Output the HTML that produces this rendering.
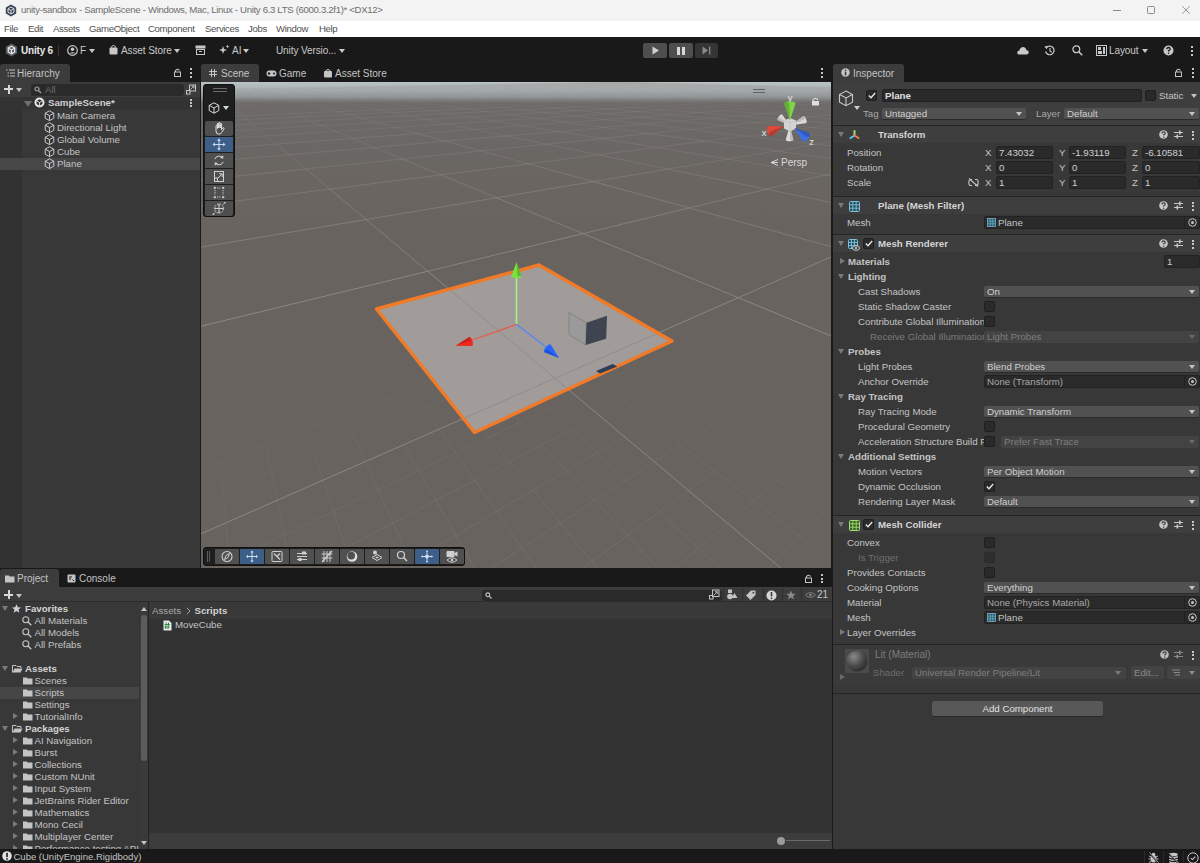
<!DOCTYPE html>
<html><head><meta charset="utf-8">
<style>
*{box-sizing:border-box;margin:0;padding:0}
html,body{width:1200px;height:863px;overflow:hidden;background:#383838}
body{position:relative;font-family:"Liberation Sans",sans-serif;font-size:9.7px;color:#c4c4c4}
.a{position:absolute}
.t{position:absolute;white-space:nowrap;line-height:12px}
.b{font-weight:bold}
svg{position:absolute;overflow:visible}
.fld{position:absolute;background:#2a2a2a;border-radius:2px}
.dd{position:absolute;background:#515151;border-radius:2px}
.dd:after{content:"";position:absolute;right:4px;top:50%;margin-top:-2px;border-left:3.5px solid transparent;border-right:3.5px solid transparent;border-top:4px solid #c4c4c4}
.cb{position:absolute;width:11px;height:11px;background:#2a2a2a;border-radius:2px}
.tri-d{position:absolute;width:0;height:0;border-left:4px solid transparent;border-right:4px solid transparent;border-top:6px solid #6e6e6e}
.tri-r{position:absolute;width:0;height:0;border-top:4px solid transparent;border-bottom:4px solid transparent;border-left:6px solid #6e6e6e}
</style></head><body>

<!-- TITLE BAR -->
<div class="a" style="left:0;top:0;width:1200px;height:21px;background:#f3f3f3"></div>
<div class="a" style="left:0;top:21px;width:1200px;height:16px;background:#ffffff"></div>
<div class="t" style="left:21px;top:4px;font-size:9.6px;color:#6e6e6e;letter-spacing:-0.32px">unity-sandbox - SampleScene - Windows, Mac, Linux - Unity 6.3 LTS (6000.3.2f1)* &lt;DX12&gt;</div>

<!-- MENU -->
<div class="t" style="left:4px;top:23px;font-size:9.6px;color:#505050;letter-spacing:-0.35px">File</div>
<div class="t" style="left:28px;top:23px;font-size:9.6px;color:#505050;letter-spacing:-0.35px">Edit</div>
<div class="t" style="left:53px;top:23px;font-size:9.6px;color:#505050;letter-spacing:-0.35px">Assets</div>
<div class="t" style="left:89px;top:23px;font-size:9.6px;color:#505050;letter-spacing:-0.35px">GameObject</div>
<div class="t" style="left:148px;top:23px;font-size:9.6px;color:#505050;letter-spacing:-0.35px">Component</div>
<div class="t" style="left:205px;top:23px;font-size:9.6px;color:#505050;letter-spacing:-0.35px">Services</div>
<div class="t" style="left:248px;top:23px;font-size:9.6px;color:#505050;letter-spacing:-0.35px">Jobs</div>
<div class="t" style="left:276px;top:23px;font-size:9.6px;color:#505050;letter-spacing:-0.35px">Window</div>
<div class="t" style="left:319px;top:23px;font-size:9.6px;color:#505050;letter-spacing:-0.35px">Help</div>

<!-- TOOLBAR -->
<div class="a" style="left:0;top:37px;width:1200px;height:45px;background:#191919"></div>

<!-- title icons -->
<svg style="left:5px;top:4px" width="12" height="13" viewBox="0 0 12 13"><path d="M6 0.5 L11.2 3.5 V9.5 L6 12.5 L0.8 9.5 V3.5Z" fill="#3a4452"/><path d="M6 3 L9 4.7 V8.3 L6 10 L3 8.3 V4.7Z" fill="none" stroke="#dfe3e8" stroke-width="1"/><path d="M6 6.5 V10 M6 6.5 L3 4.7 M6 6.5 L9 4.7" stroke="#dfe3e8" stroke-width="0.9"/></svg>
<div class="a" style="left:1113px;top:10px;width:8px;height:1px;background:#8a8a8a"></div>
<div class="a" style="left:1147px;top:6px;width:8px;height:8px;border:1px solid #8a8a8a;border-radius:1.5px"></div>
<svg style="left:1182px;top:6px" width="8" height="8"><path d="M0.3 0.3 L7.7 7.7 M7.7 0.3 L0.3 7.7" stroke="#8a8a8a" stroke-width="0.9"/></svg>

<!-- toolbar left -->
<svg style="left:5px;top:43px" width="13" height="14" viewBox="0 0 12 13"><path d="M6 0.5 L11.2 3.5 V9.5 L6 12.5 L0.8 9.5 V3.5Z" fill="#5a5f66"/><path d="M6 3 L9 4.7 V8.3 L6 10 L3 8.3 V4.7Z" fill="none" stroke="#e8e8e8" stroke-width="1.1"/><path d="M6 6.5 V10 M6 6.5 L3 4.7 M6 6.5 L9 4.7" stroke="#e8e8e8" stroke-width="1"/></svg>
<div class="t b" style="left:21px;top:45px;font-size:10px;color:#e6e6e6;letter-spacing:-0.2px">Unity 6</div>
<div class="a" style="left:58px;top:45px;width:1px;height:11px;background:#3a3a3a"></div>
<svg style="left:67px;top:45px" width="11" height="11"><circle cx="5.5" cy="5.5" r="4.8" fill="none" stroke="#c8c8c8" stroke-width="1.2"/><circle cx="5.5" cy="4.3" r="1.8" fill="#c8c8c8"/><path d="M2.3 8.6 Q5.5 5.8 8.7 8.6" fill="#c8c8c8"/></svg>
<div class="t" style="left:80px;top:45px;font-size:10px;color:#c8c8c8">F</div>
<div class="a" style="left:89px;top:49px;border-left:3.5px solid transparent;border-right:3.5px solid transparent;border-top:4px solid #c8c8c8"></div>
<svg style="left:109px;top:44px" width="9" height="11"><path d="M2.5 3.5 V2.5 Q4.5 0.3 6.5 2.5 V3.5" fill="none" stroke="#c8c8c8" stroke-width="1"/><rect x="0.5" y="3.5" width="8" height="7" rx="1" fill="#c8c8c8"/></svg>
<div class="t" style="left:121px;top:45px;font-size:10px;color:#c8c8c8;letter-spacing:-0.1px">Asset Store</div>
<div class="a" style="left:174px;top:49px;border-left:3.5px solid transparent;border-right:3.5px solid transparent;border-top:4px solid #c8c8c8"></div>
<svg style="left:195px;top:45px" width="11" height="10"><rect x="0.5" y="0.5" width="10" height="3" fill="#c8c8c8"/><rect x="1.5" y="4.5" width="8" height="5" fill="none" stroke="#c8c8c8" stroke-width="1"/><path d="M4 6.5 H7" stroke="#c8c8c8"/></svg>
<svg style="left:218px;top:44px" width="12" height="12"><path d="M5 2 L6 5 L9 6 L6 7 L5 10 L4 7 L1 6 L4 5Z" fill="#c8c8c8"/><path d="M9.5 0.5 L10 2 L11.5 2.5 L10 3 L9.5 4.5 L9 3 L7.5 2.5 L9 2Z" fill="#c8c8c8"/></svg>
<div class="t" style="left:232px;top:45px;font-size:10px;color:#c8c8c8">AI</div>
<div class="a" style="left:243px;top:49px;border-left:3.5px solid transparent;border-right:3.5px solid transparent;border-top:4px solid #c8c8c8"></div>
<div class="t" style="left:276px;top:45px;font-size:10px;color:#c8c8c8;letter-spacing:-0.1px">Unity Versio...</div>
<div class="a" style="left:339px;top:49px;border-left:3.5px solid transparent;border-right:3.5px solid transparent;border-top:4px solid #c8c8c8"></div>

<!-- play controls -->
<div class="a" style="left:643px;top:43px;width:24px;height:15px;background:#4e4e4e;border-radius:2px"></div>
<div class="a" style="left:669px;top:43px;width:24px;height:15px;background:#4e4e4e;border-radius:2px"></div>
<div class="a" style="left:695px;top:43px;width:23px;height:15px;background:#353535;border-radius:2px"></div>
<svg style="left:652px;top:46px" width="8" height="9"><path d="M0.5 0.5 L7 4.5 L0.5 8.5Z" fill="#d0d0d0"/></svg>
<div class="a" style="left:677px;top:47px;width:3px;height:8px;background:#d8d8d8"></div>
<div class="a" style="left:682px;top:47px;width:3px;height:8px;background:#d8d8d8"></div>
<svg style="left:702px;top:46px" width="10" height="9"><path d="M0.5 0.5 L6 4.5 L0.5 8.5Z" fill="#8a8a8a"/><rect x="7" y="0.5" width="1.3" height="8" fill="#8a8a8a"/></svg>

<!-- toolbar right -->
<svg style="left:1017px;top:46px" width="12" height="9"><path d="M2.5 8.5 Q0 8.5 0.3 6.2 Q0.6 4.5 2.4 4.5 Q2.8 1.5 5.8 1 Q8.8 1 9.3 4 Q11.8 4.2 11.8 6.3 Q11.6 8.5 9.5 8.5Z" fill="#c8c8c8"/></svg>
<svg style="left:1044px;top:45px" width="12" height="11"><path d="M2.2 3 A4.3 4.3 0 1 1 1.6 6.5" fill="none" stroke="#c8c8c8" stroke-width="1.2"/><path d="M0.3 1.8 L2.8 4.2 L3.5 0.8Z" fill="#c8c8c8"/><path d="M6 3 V6 L7.8 7.3" fill="none" stroke="#c8c8c8" stroke-width="1.1"/></svg>
<svg style="left:1072px;top:45px" width="11" height="11"><circle cx="4.3" cy="4.3" r="3.4" fill="none" stroke="#c8c8c8" stroke-width="1.3"/><path d="M6.8 6.8 L10.2 10.2" stroke="#c8c8c8" stroke-width="1.6"/></svg>
<svg style="left:1096px;top:45px" width="11" height="11"><rect x="0.5" y="0.5" width="10" height="10" fill="none" stroke="#c8c8c8" stroke-width="1"/><rect x="2" y="2" width="3" height="3" fill="#c8c8c8"/><rect x="2" y="6" width="4" height="3" fill="#c8c8c8"/><rect x="7" y="2" width="2" height="7" fill="#c8c8c8"/></svg>
<div class="t" style="left:1109px;top:45px;font-size:10px;color:#c8c8c8;letter-spacing:-0.1px">Layout</div>
<div class="a" style="left:1142px;top:49px;border-left:3.5px solid transparent;border-right:3.5px solid transparent;border-top:4px solid #c8c8c8"></div>
<svg style="left:1163px;top:45px" width="11" height="11"><circle cx="5.5" cy="5.5" r="5" fill="#c8c8c8"/><path d="M3.8 4.2 Q3.8 2.5 5.5 2.5 Q7.2 2.5 7.2 4 Q7.2 5 5.6 5.6 V6.6" fill="none" stroke="#191919" stroke-width="1.3"/><circle cx="5.6" cy="8.3" r="0.8" fill="#191919"/></svg>
<div class="a" style="left:1191px;top:46px;width:2px;height:2px;background:#c8c8c8"></div>
<div class="a" style="left:1191px;top:50px;width:2px;height:2px;background:#c8c8c8"></div>
<div class="a" style="left:1191px;top:54px;width:2px;height:2px;background:#c8c8c8"></div>

<!-- PANELS -->
<div class="a" id="hier" style="left:0;top:82px;width:200px;height:486px;background:#383838"></div>
<div class="a" style="left:200px;top:63px;width:1px;height:505px;background:#191919"></div>
<!-- hierarchy content -->
<div class="a" style="left:0;top:82px;width:200px;height:15px;background:#3c3c3c"></div>
<div class="a" style="left:0;top:109px;width:22px;height:459px;background:#323232"></div>
<div class="a" style="left:0;top:97px;width:200px;height:12px;background:#333333"></div>
<div class="a" style="left:0;top:158px;width:200px;height:12px;background:#474747"></div>
<div class="a" style="left:4px;top:88px;width:9px;height:2px;background:#d8d8d8"></div>
<div class="a" style="left:7.5px;top:84.5px;width:2px;height:9px;background:#d8d8d8"></div>
<div class="a" style="left:16px;top:88px;border-left:3px solid transparent;border-right:3px solid transparent;border-top:4px solid #c4c4c4"></div>
<div class="a" style="left:31px;top:84px;width:153px;height:12px;background:#2a2a2a;border-radius:3px"></div>
<svg style="left:34px;top:86px" width="9" height="8"><circle cx="3" cy="3" r="2" fill="none" stroke="#a0a0a0" stroke-width="1.2"/><path d="M4.5 4.5 L7 7" stroke="#a0a0a0" stroke-width="1.2"/></svg>
<div class="t" style="left:45px;top:84px;color:#6a6a6a">All</div>
<svg style="left:186px;top:84px" width="10" height="11"><rect x="3.5" y="1" width="6" height="6" fill="none" stroke="#c4c4c4" stroke-width="1"/><rect x="0.5" y="6.5" width="3.5" height="3.5" fill="none" stroke="#c4c4c4" stroke-width="1"/><path d="M4.5 5.5 L8 2 M5.5 2 H8 V4.5" fill="none" stroke="#c4c4c4" stroke-width="0.9"/></svg>
<div class="tri-d" style="left:24px;top:101px;border-top-color:#707070"></div>
<svg style="left:34px;top:97px" width="11" height="11" viewBox="0 0 11 11"><circle cx="5.5" cy="5.5" r="5" fill="#e6e6e6"/><path d="M5.5 2.2 L8.4 3.9 V7.1 L5.5 8.8 L2.6 7.1 V3.9Z" fill="#333"/><path d="M5.5 5.5 V8.8 M5.5 5.5 L2.6 3.9 M5.5 5.5 L8.4 3.9" stroke="#e6e6e6" stroke-width="0.9"/></svg>
<div class="t b" style="left:48px;top:97px;color:#cfcfcf">SampleScene*</div>
<div class="a" style="left:189.5px;top:99px;width:2px;height:2px;background:#c4c4c4"></div>
<div class="a" style="left:189.5px;top:102px;width:2px;height:2px;background:#c4c4c4"></div>
<div class="a" style="left:189.5px;top:105px;width:2px;height:2px;background:#c4c4c4"></div>
<!-- rows -->
<svg style="left:44px;top:110px" width="11" height="60" viewBox="0 0 11 60"><g fill="none" stroke="#c8c8c8" stroke-width="1"><path transform="translate(0 0)" d="M5.5 0.8 L9.8 3.2 V8.2 L5.5 10.6 L1.2 8.2 V3.2Z M1.2 3.2 L5.5 5.6 L9.8 3.2 M5.5 5.6 V10.6"/><path transform="translate(0 12)" d="M5.5 0.8 L9.8 3.2 V8.2 L5.5 10.6 L1.2 8.2 V3.2Z M1.2 3.2 L5.5 5.6 L9.8 3.2 M5.5 5.6 V10.6"/><path transform="translate(0 24)" d="M5.5 0.8 L9.8 3.2 V8.2 L5.5 10.6 L1.2 8.2 V3.2Z M1.2 3.2 L5.5 5.6 L9.8 3.2 M5.5 5.6 V10.6"/><path transform="translate(0 36)" d="M5.5 0.8 L9.8 3.2 V8.2 L5.5 10.6 L1.2 8.2 V3.2Z M1.2 3.2 L5.5 5.6 L9.8 3.2 M5.5 5.6 V10.6"/><path transform="translate(0 48)" d="M5.5 0.8 L9.8 3.2 V8.2 L5.5 10.6 L1.2 8.2 V3.2Z M1.2 3.2 L5.5 5.6 L9.8 3.2 M5.5 5.6 V10.6"/></g></svg>
<div class="t" style="left:57px;top:110px">Main Camera</div>
<div class="t" style="left:57px;top:122px">Directional Light</div>
<div class="t" style="left:57px;top:134px">Global Volume</div>
<div class="t" style="left:57px;top:146px">Cube</div>
<div class="t" style="left:57px;top:158px">Plane</div>

<!-- tabs -->
<div class="a" style="left:0;top:64px;width:70px;height:18px;background:#3c3c3c;border-radius:3px 3px 0 0"></div>
<svg style="left:6px;top:69px" width="9" height="8"><path d="M0 1 H1.5 M3 1 H9 M1.5 4 H3 M4 4 H9 M1.5 7 H3 M4 7 H9" stroke="#c4c4c4" stroke-width="1"/></svg>
<div class="t" style="left:17px;top:68px;font-size:10px;color:#c4c4c4">Hierarchy</div>
<svg style="left:174px;top:68px" width="7" height="9"><path d="M1.5 4 V2.5 Q3.5 0 5.5 2.5" fill="none" stroke="#c4c4c4" stroke-width="1.1"/><rect x="0.5" y="4" width="6" height="4.5" fill="none" stroke="#c4c4c4" stroke-width="1"/></svg>
<div class="a" style="left:189.5px;top:68px;width:2px;height:2px;background:#c4c4c4"></div>
<div class="a" style="left:189.5px;top:72px;width:2px;height:2px;background:#c4c4c4"></div>
<div class="a" style="left:189.5px;top:76px;width:2px;height:2px;background:#c4c4c4"></div>

<div class="a" style="left:201px;top:64px;width:58px;height:18px;background:#3c3c3c;border-radius:3px 3px 0 0"></div>
<svg style="left:209px;top:69px" width="8" height="8"><path d="M2.5 0 V8 M5.5 0 V8 M0 2.5 H8 M0 5.5 H8" stroke="#c4c4c4" stroke-width="1"/></svg>
<div class="t" style="left:221px;top:68px;font-size:10px;color:#c4c4c4">Scene</div>
<svg style="left:266px;top:70px" width="11" height="7"><rect x="0.5" y="0.5" width="10" height="6" rx="3" fill="#c4c4c4"/><circle cx="3" cy="3.5" r="1.2" fill="#191919"/><circle cx="8" cy="3.5" r="1" fill="#191919"/></svg>
<div class="t" style="left:279px;top:68px;font-size:10px;color:#c4c4c4">Game</div>
<svg style="left:324px;top:68px" width="8" height="10"><path d="M2 3.5 V2.5 Q4 0.2 6 2.5 V3.5" fill="none" stroke="#c4c4c4" stroke-width="1"/><rect x="0" y="3" width="8" height="6.5" rx="1" fill="#c4c4c4"/></svg>
<div class="t" style="left:335px;top:68px;font-size:10px;color:#c4c4c4">Asset Store</div>
<div class="a" style="left:820.5px;top:68px;width:2px;height:2px;background:#c4c4c4"></div>
<div class="a" style="left:820.5px;top:72px;width:2px;height:2px;background:#c4c4c4"></div>
<div class="a" style="left:820.5px;top:76px;width:2px;height:2px;background:#c4c4c4"></div>

<div class="a" style="left:833px;top:64px;width:71px;height:18px;background:#3c3c3c;border-radius:3px 3px 0 0"></div>
<svg style="left:841px;top:68px" width="9" height="9"><circle cx="4.5" cy="4.5" r="4.2" fill="#c4c4c4"/><rect x="3.8" y="3.8" width="1.5" height="3.5" fill="#383838"/><circle cx="4.5" cy="2.4" r="0.8" fill="#383838"/></svg>
<div class="t" style="left:853px;top:68px;font-size:10px;color:#c4c4c4">Inspector</div>
<svg style="left:1175px;top:68px" width="7" height="9"><path d="M1.5 4 V2.5 Q3.5 0 5.5 2.5" fill="none" stroke="#c4c4c4" stroke-width="1.1"/><rect x="0.5" y="4" width="6" height="4.5" fill="none" stroke="#c4c4c4" stroke-width="1"/></svg>
<div class="a" style="left:1191.5px;top:68px;width:2px;height:2px;background:#c4c4c4"></div>
<div class="a" style="left:1191.5px;top:72px;width:2px;height:2px;background:#c4c4c4"></div>
<div class="a" style="left:1191.5px;top:76px;width:2px;height:2px;background:#c4c4c4"></div>

<!--SCENE--><div class="a" id="scene" style="left:201px;top:82px;width:630px;height:486px;background:#68635e;overflow:hidden">
<div class="a" style="left:0;top:0;width:631px;height:160px;background:linear-gradient(#bac3c3 0px,#aab2b2 8px,#929797 15px,#7d7c7b 18px,#6e6a68 21px,#6b6764 60px,#68635e 160px)"></div>
<svg width="631" height="486" style="left:0;top:0">
<defs><clipPath id="pc"><path d="M175.5 227L338 183L471 259L273.5 350.5Z"/></clipPath></defs>
<path d="M175.5 227L338 183L471 259L273.5 350.5Z" fill="#a19c99"/>
<defs><mask id="nopl"><rect x="-10" y="-10" width="660" height="510" fill="#fff"/><path d="M175.5 227L338 183L471 259L273.5 350.5Z" fill="#000"/></mask></defs><g mask="url(#nopl)"><path d="M158.6 285.6L126.8 296.1M126.8 296.1L92.7 307.4M92.7 307.4L56.0 319.6M56.0 319.6L16.3 332.7M254.5 271.1L227.6 280.6M227.6 280.6L198.8 290.8M198.8 290.8L167.9 301.7M167.9 301.7L134.6 313.4M134.6 313.4L98.8 326.1M98.8 326.1L60.1 339.7M60.1 339.7L18.1 354.6M18.1 354.6L-27.6 370.7M318.7 266.6L294.3 275.8M294.3 275.8L268.3 285.6M268.3 285.6L240.4 296.2M240.4 296.2L210.4 307.5M358.9 271.2L335.4 280.7M335.4 280.7L310.4 290.9M310.4 290.9L283.5 301.8M443.3 280.8L422.0 290.9M422.0 290.9L399.2 301.9M487.8 285.8L467.7 296.4M467.7 296.4L446.1 307.7M514.9 302.0L494.7 313.7M494.7 313.7L472.9 326.4M564.0 307.8L545.3 320.0M545.3 320.0L525.0 333.2M597.8 326.5L635.8 347.6M635.8 347.6L678.9 371.4M597.8 326.5L579.3 340.2M579.3 340.2L559.2 355.1M487.8 285.8L514.9 302.0M514.9 302.0L545.3 320.0M545.3 320.0L579.3 340.2M579.3 340.2L617.8 363.1M617.8 363.1L661.6 389.1M635.8 347.6L617.8 363.1M617.8 363.1L598.1 380.0M443.3 280.8L467.7 296.4M467.7 296.4L494.7 313.7M494.7 313.7L525.0 333.2M400.4 275.9L422.0 290.9M422.0 290.9L446.1 307.7M358.9 271.2L378.0 285.7M378.0 285.7L399.2 301.9M279.8 262.2L294.3 275.8M294.3 275.8L310.4 290.9M254.5 271.1L268.3 285.6M268.3 285.6L283.5 301.8M216.0 266.5L227.6 280.6M227.6 280.6L240.4 296.2M188.3 275.7L198.8 290.8M198.8 290.8L210.4 307.5M158.6 285.6L167.9 301.7M167.9 301.7L178.2 319.7M126.8 296.1L134.6 313.4M134.6 313.4L143.4 332.8M92.7 307.4L98.8 326.1M98.8 326.1L105.7 347.1M56.0 319.6L60.1 339.7M60.1 339.7L64.7 362.5M16.3 332.7L18.1 354.6M18.1 354.6L20.1 379.4" stroke="#8d8984" stroke-opacity="0.07" stroke-width="1" fill="none"/>
<path d="M210.4 307.5L178.2 319.7M178.2 319.7L143.4 332.8M143.4 332.8L105.7 347.1M105.7 347.1L64.7 362.5M64.7 362.5L20.1 379.4M20.1 379.4L-28.8 397.9M283.5 301.8L254.6 313.5M254.6 313.5L223.4 326.2M223.4 326.2L189.8 339.9M189.8 339.9L153.2 354.7M153.2 354.7L113.5 370.9M113.5 370.9L70.0 388.5M70.0 388.5L22.4 407.9M22.4 407.9L-30.1 429.2M399.2 301.9L374.6 313.6M374.6 313.6L348.1 326.3M348.1 326.3L319.5 340.0M446.1 307.7L422.8 319.9M422.8 319.9L397.7 333.0M397.7 333.0L370.6 347.3M472.9 326.4L449.4 340.1M449.4 340.1L423.8 355.0M525.0 333.2L503.1 347.4M503.1 347.4L479.4 362.9M559.2 355.1L537.4 371.3M537.4 371.3L513.5 389.0M598.1 380.0L576.5 398.5M525.0 333.2L559.2 355.1M559.2 355.1L598.1 380.0M598.1 380.0L642.6 408.5M642.6 408.5L621.6 429.9M446.1 307.7L472.9 326.4M472.9 326.4L503.1 347.4M503.1 347.4L537.4 371.3M537.4 371.3L576.5 398.5M576.5 398.5L621.6 429.9M621.6 429.9L674.2 466.6M399.2 301.9L422.8 319.9M422.8 319.9L449.4 340.1M449.4 340.1L479.4 362.9M310.4 290.9L328.2 307.6M328.2 307.6L348.1 326.3M348.1 326.3L370.6 347.3M283.5 301.8L300.5 319.8M300.5 319.8L319.5 340.0M240.4 296.2L254.6 313.5M254.6 313.5L270.5 332.9M210.4 307.5L223.4 326.2M223.4 326.2L238.1 347.2M178.2 319.7L189.8 339.9M189.8 339.9L202.8 362.7M143.4 332.8L153.2 354.7M105.7 347.1L113.5 370.9M64.7 362.5L70.0 388.5M20.1 379.4L22.4 407.9M22.4 407.9L25.0 440.8" stroke="#8d8984" stroke-opacity="0.14" stroke-width="1" fill="none"/>
<path d="M319.5 340.0L288.5 354.8M288.5 354.8L254.7 371.0M254.7 371.0L217.7 388.7M217.7 388.7L177.2 408.0M177.2 408.0L132.6 429.4M132.6 429.4L83.2 453.0M83.2 453.0L28.1 479.3M28.1 479.3L-33.5 508.8M370.6 347.3L341.0 362.8M341.0 362.8L308.9 379.7M308.9 379.7L273.6 398.2M423.8 355.0L396.0 371.1M396.0 371.1L365.6 388.8M365.6 388.8L332.2 408.2M479.4 362.9L453.4 379.8M453.4 379.8L425.0 398.3M425.0 398.3L393.8 418.7M513.5 389.0L487.3 408.4M487.3 408.4L458.5 429.7M576.5 398.5L552.8 418.9M552.8 418.9L526.6 441.4M526.6 441.4L497.5 466.4M621.6 429.9L598.4 453.6M598.4 453.6L572.6 480.0M479.4 362.9L513.5 389.0M513.5 389.0L552.8 418.9M552.8 418.9L598.4 453.6M598.4 453.6L652.1 494.5M370.6 347.3L396.0 371.1M396.0 371.1L425.0 398.3M425.0 398.3L458.5 429.7M319.5 340.0L341.0 362.8M341.0 362.8L365.6 388.8M365.6 388.8L393.8 418.7M270.5 332.9L288.5 354.8M288.5 354.8L308.9 379.7M308.9 379.7L332.2 408.2M238.1 347.2L254.7 371.0M254.7 371.0L273.6 398.2M202.8 362.7L217.7 388.7M217.7 388.7L234.9 418.5M153.2 354.7L164.4 379.6M164.4 379.6L177.2 408.0M113.5 370.9L122.4 398.0M122.4 398.0L132.6 429.4M70.0 388.5L76.1 418.4M76.1 418.4L83.2 453.0M83.2 453.0L91.5 493.8M25.0 440.8L28.1 479.3M28.1 479.3L31.8 525.1" stroke="#8d8984" stroke-opacity="0.21" stroke-width="1" fill="none"/>
<path d="M273.6 398.2L234.9 418.5M234.9 418.5L192.1 441.0M192.1 441.0L144.6 465.9M144.6 465.9L91.5 493.8M332.2 408.2L295.5 429.6M295.5 429.6L254.8 453.2M254.8 453.2L209.5 479.6M209.5 479.6L158.7 509.1M393.8 418.7L359.3 441.2M359.3 441.2L321.0 466.1M321.0 466.1L278.2 494.0M458.5 429.7L426.5 453.4M426.5 453.4L390.9 479.8M390.9 479.8L351.1 509.3M497.5 466.4L465.0 494.3M572.6 480.0L543.6 509.6M458.5 429.7L497.5 466.4M497.5 466.4L543.6 509.6M393.8 418.7L426.5 453.4M426.5 453.4L465.0 494.3M332.2 408.2L359.3 441.2M359.3 441.2L390.9 479.8M390.9 479.8L428.5 525.6M273.6 398.2L295.5 429.6M295.5 429.6L321.0 466.1M321.0 466.1L351.1 509.3M234.9 418.5L254.8 453.2M254.8 453.2L278.2 494.0M177.2 408.0L192.1 441.0M192.1 441.0L209.5 479.6M209.5 479.6L230.1 525.4M132.6 429.4L144.6 465.9M144.6 465.9L158.7 509.1" stroke="#8d8984" stroke-opacity="0.28" stroke-width="1" fill="none"/></g>
<path d="M428.0 0.3L436.7 0.5M436.7 0.5L445.8 0.7M445.8 0.7L455.2 1.0M455.2 1.0L465.0 1.2M465.0 1.2L475.3 1.5M475.3 1.5L486.0 1.8M486.0 1.8L497.2 2.0M497.2 2.0L508.9 2.3M508.9 2.3L521.1 2.6M521.1 2.6L534.0 3.0M534.0 3.0L547.4 3.3M547.4 3.3L561.6 3.7M561.6 3.7L576.5 4.1M576.5 4.1L592.2 4.5M592.2 4.5L608.7 4.9M608.7 4.9L626.2 5.3M626.2 5.3L644.7 5.8M411.5 0.2L403.2 0.4M403.2 0.4L394.6 0.5M394.6 0.5L385.8 0.7M385.8 0.7L376.8 0.8M376.8 0.8L367.5 1.0M367.5 1.0L358.0 1.1M358.0 1.1L348.2 1.3M348.2 1.3L338.1 1.5M338.1 1.5L327.8 1.7M327.8 1.7L317.1 1.8M317.1 1.8L306.1 2.0M306.1 2.0L294.8 2.2M294.8 2.2L283.1 2.4M283.1 2.4L271.0 2.6M271.0 2.6L258.6 2.9M258.6 2.9L245.8 3.1M245.8 3.1L232.5 3.3M232.5 3.3L218.8 3.5M218.8 3.5L204.7 3.8M204.7 3.8L190.1 4.0M190.1 4.0L174.9 4.3M174.9 4.3L159.2 4.6M159.2 4.6L142.9 4.9M142.9 4.9L126.0 5.1M126.0 5.1L108.5 5.4M108.5 5.4L90.4 5.8M90.4 5.8L71.5 6.1M71.5 6.1L51.8 6.4M51.8 6.4L31.3 6.8M31.3 6.8L10.0 7.2M10.0 7.2L-12.2 7.5M411.5 0.2L419.8 0.4M419.8 0.4L428.5 0.7M428.5 0.7L437.5 0.9M437.5 0.9L446.9 1.1M446.9 1.1L456.7 1.4M456.7 1.4L466.9 1.7M466.9 1.7L477.6 1.9M477.6 1.9L488.7 2.2M488.7 2.2L500.4 2.5M500.4 2.5L512.7 2.9M512.7 2.9L525.5 3.2M525.5 3.2L539.0 3.6M539.0 3.6L553.2 3.9M553.2 3.9L568.1 4.3M568.1 4.3L583.8 4.7M583.8 4.7L600.4 5.2M600.4 5.2L618.0 5.6M618.0 5.6L636.6 6.1M636.6 6.1L656.4 6.6M428.0 0.3L419.8 0.4M419.8 0.4L411.4 0.6M411.4 0.6L402.8 0.7M402.8 0.7L394.0 0.9M394.0 0.9L384.9 1.1M384.9 1.1L375.5 1.2M375.5 1.2L365.9 1.4M365.9 1.4L356.0 1.6M356.0 1.6L345.8 1.8M345.8 1.8L335.3 1.9M335.3 1.9L324.5 2.1M324.5 2.1L313.4 2.3M313.4 2.3L301.9 2.5M301.9 2.5L290.1 2.7M290.1 2.7L277.8 3.0M277.8 3.0L265.2 3.2M265.2 3.2L252.2 3.4M252.2 3.4L238.7 3.7M238.7 3.7L224.8 3.9M224.8 3.9L210.4 4.2M210.4 4.2L195.4 4.4M195.4 4.4L179.9 4.7M179.9 4.7L163.9 5.0M163.9 5.0L147.3 5.3M147.3 5.3L130.0 5.6M130.0 5.6L112.0 5.9M112.0 5.9L93.4 6.3M93.4 6.3L74.0 6.6M74.0 6.6L53.8 7.0M53.8 7.0L32.7 7.3M32.7 7.3L10.7 7.7M10.7 7.7L-12.2 8.1M403.2 0.4L411.4 0.6M411.4 0.6L420.0 0.8M420.0 0.8L429.0 1.1M429.0 1.1L438.3 1.3M438.3 1.3L448.1 1.6M448.1 1.6L458.3 1.9M458.3 1.9L468.9 2.1M468.9 2.1L480.0 2.4M480.0 2.4L491.7 2.8M491.7 2.8L503.9 3.1M503.9 3.1L516.8 3.4M516.8 3.4L530.3 3.8M530.3 3.8L544.4 4.2M544.4 4.2L559.4 4.6M559.4 4.6L575.2 5.0M575.2 5.0L591.9 5.5M591.9 5.5L609.6 5.9M609.6 5.9L628.3 6.5M628.3 6.5L648.2 7.0M436.7 0.5L428.5 0.7M428.5 0.7L420.0 0.8M420.0 0.8L411.4 1.0M411.4 1.0L402.4 1.1M402.4 1.1L393.3 1.3M393.3 1.3L383.8 1.5M383.8 1.5L374.1 1.7M374.1 1.7L364.1 1.8M364.1 1.8L353.8 2.0M353.8 2.0L343.2 2.2M343.2 2.2L332.3 2.4M332.3 2.4L321.0 2.6M321.0 2.6L309.4 2.9M309.4 2.9L297.4 3.1M297.4 3.1L285.0 3.3M285.0 3.3L272.2 3.5M272.2 3.5L258.9 3.8M258.9 3.8L245.2 4.0M245.2 4.0L231.0 4.3M231.0 4.3L216.3 4.6M216.3 4.6L201.1 4.9M201.1 4.9L185.3 5.1M185.3 5.1L168.9 5.5M168.9 5.5L151.9 5.8M151.9 5.8L134.2 6.1M134.2 6.1L115.8 6.4M115.8 6.4L96.6 6.8M96.6 6.8L76.7 7.2M76.7 7.2L55.8 7.5M55.8 7.5L34.1 7.9M34.1 7.9L11.5 8.4M11.5 8.4L-12.3 8.8M394.6 0.5L402.8 0.7M402.8 0.7L411.4 1.0M411.4 1.0L420.3 1.2M420.3 1.2L429.6 1.5M429.6 1.5L439.2 1.8M439.2 1.8L449.4 2.0M449.4 2.0L460.0 2.3M460.0 2.3L471.1 2.6M471.1 2.6L482.7 3.0M482.7 3.0L494.9 3.3M494.9 3.3L507.7 3.7M507.7 3.7L521.2 4.1M521.2 4.1L535.4 4.5M535.4 4.5L550.4 4.9M550.4 4.9L566.2 5.3M566.2 5.3L583.0 5.8M583.0 5.8L600.7 6.3M600.7 6.3L619.6 6.8M619.6 6.8L639.6 7.4M445.8 0.7L437.5 0.9M437.5 0.9L429.0 1.1M429.0 1.1L420.3 1.2M420.3 1.2L411.3 1.4M411.3 1.4L402.0 1.6M402.0 1.6L392.5 1.8M392.5 1.8L382.7 1.9M382.7 1.9L372.6 2.1M372.6 2.1L362.2 2.3M362.2 2.3L351.5 2.5M351.5 2.5L340.5 2.8M340.5 2.8L329.0 3.0M329.0 3.0L317.3 3.2M317.3 3.2L305.1 3.4M305.1 3.4L292.5 3.7M292.5 3.7L279.5 3.9M279.5 3.9L266.0 4.2M266.0 4.2L252.0 4.4M252.0 4.4L237.6 4.7M237.6 4.7L222.6 5.0M222.6 5.0L207.1 5.3M207.1 5.3L190.9 5.6M190.9 5.6L174.2 5.9M174.2 5.9L156.7 6.3M156.7 6.3L138.6 6.6M138.6 6.6L119.7 7.0M119.7 7.0L100.0 7.3M100.0 7.3L79.5 7.7M79.5 7.7L58.1 8.1M58.1 8.1L35.7 8.6M35.7 8.6L12.2 9.0M12.2 9.0L-12.3 9.5M385.8 0.7L394.0 0.9M394.0 0.9L402.4 1.1M402.4 1.1L411.3 1.4M411.3 1.4L420.5 1.7M420.5 1.7L430.1 1.9M430.1 1.9L440.2 2.2M440.2 2.2L450.8 2.5M450.8 2.5L461.8 2.9M461.8 2.9L473.4 3.2M473.4 3.2L485.6 3.6M485.6 3.6L498.4 3.9M498.4 3.9L511.9 4.3M511.9 4.3L526.1 4.7M526.1 4.7L541.1 5.2M541.1 5.2L557.0 5.6M557.0 5.6L573.8 6.1M573.8 6.1L591.6 6.6M591.6 6.6L610.5 7.2M610.5 7.2L630.7 7.8M630.7 7.8L652.3 8.4M455.2 1.0L446.9 1.1M446.9 1.1L438.3 1.3M438.3 1.3L429.6 1.5M429.6 1.5L420.5 1.7M420.5 1.7L411.2 1.8M411.2 1.8L401.6 2.0M401.6 2.0L391.7 2.2M391.7 2.2L381.5 2.4M381.5 2.4L371.0 2.6M371.0 2.6L360.2 2.9M360.2 2.9L349.0 3.1M349.0 3.1L337.4 3.3M337.4 3.3L325.5 3.5M325.5 3.5L313.2 3.8M313.2 3.8L300.4 4.0M300.4 4.0L287.2 4.3M287.2 4.3L273.5 4.6M273.5 4.6L259.3 4.9M259.3 4.9L244.5 5.2M244.5 5.2L229.3 5.5M229.3 5.5L213.4 5.8M213.4 5.8L196.9 6.1M196.9 6.1L179.8 6.4M179.8 6.4L161.9 6.8M161.9 6.8L143.3 7.2M143.3 7.2L123.9 7.5M123.9 7.5L103.7 7.9M103.7 7.9L82.6 8.4M82.6 8.4L60.5 8.8M60.5 8.8L37.3 9.3M37.3 9.3L13.1 9.7M13.1 9.7L-12.3 10.2M376.8 0.8L384.9 1.1M384.9 1.1L393.3 1.3M393.3 1.3L402.0 1.6M402.0 1.6L411.2 1.8M411.2 1.8L420.8 2.1M420.8 2.1L430.8 2.4M430.8 2.4L441.3 2.8M441.3 2.8L452.3 3.1M452.3 3.1L463.8 3.4M463.8 3.4L476.0 3.8M476.0 3.8L488.7 4.2M488.7 4.2L502.2 4.6M502.2 4.6L516.4 5.0M516.4 5.0L531.4 5.5M531.4 5.5L547.3 5.9M547.3 5.9L564.1 6.5M564.1 6.5L582.0 7.0M582.0 7.0L601.1 7.6M601.1 7.6L621.4 8.2M621.4 8.2L643.1 8.8M465.0 1.2L456.7 1.4M456.7 1.4L448.1 1.6M448.1 1.6L439.2 1.8M439.2 1.8L430.1 1.9M430.1 1.9L420.8 2.1M420.8 2.1L411.1 2.3M411.1 2.3L401.1 2.5M401.1 2.5L390.9 2.8M390.9 2.8L380.2 3.0M380.2 3.0L369.3 3.2M369.3 3.2L358.0 3.4M358.0 3.4L346.3 3.7M346.3 3.7L334.2 3.9M334.2 3.9L321.7 4.2M321.7 4.2L308.7 4.4M308.7 4.4L295.3 4.7M295.3 4.7L281.3 5.0M281.3 5.0L266.9 5.3M266.9 5.3L251.9 5.6M251.9 5.6L236.3 5.9M236.3 5.9L220.1 6.3M220.1 6.3L203.2 6.6M203.2 6.6L185.7 7.0M185.7 7.0L167.4 7.3M167.4 7.3L148.3 7.7M148.3 7.7L128.4 8.2M128.4 8.2L107.6 8.6M107.6 8.6L85.8 9.0M85.8 9.0L63.0 9.5M63.0 9.5L39.1 10.0M39.1 10.0L14.0 10.5M14.0 10.5L-12.4 11.0M367.5 1.0L375.5 1.2M375.5 1.2L383.8 1.5M383.8 1.5L392.5 1.8M392.5 1.8L401.6 2.0M401.6 2.0L411.1 2.3M411.1 2.3L421.0 2.6M421.0 2.6L431.5 3.0M431.5 3.0L442.4 3.3M442.4 3.3L453.9 3.7M453.9 3.7L466.0 4.1M466.0 4.1L478.7 4.4M478.7 4.4L492.2 4.9M492.2 4.9L506.3 5.3M506.3 5.3L521.4 5.8M521.4 5.8L537.3 6.3M537.3 6.3L554.1 6.8M554.1 6.8L572.1 7.4M572.1 7.4L591.2 8.0M591.2 8.0L611.7 8.6M611.7 8.6L633.5 9.3M633.5 9.3L657.0 10.0M475.3 1.5L466.9 1.7M466.9 1.7L458.3 1.9M458.3 1.9L449.4 2.0M449.4 2.0L440.2 2.2M440.2 2.2L430.8 2.4M430.8 2.4L421.0 2.6M421.0 2.6L411.0 2.9M411.0 2.9L400.6 3.1M400.6 3.1L389.9 3.3M389.9 3.3L378.8 3.5M378.8 3.5L367.4 3.8M367.4 3.8L355.6 4.0M355.6 4.0L343.3 4.3M343.3 4.3L330.6 4.6M330.6 4.6L317.5 4.9M317.5 4.9L303.8 5.2M303.8 5.2L289.7 5.5M289.7 5.5L274.9 5.8M274.9 5.8L259.7 6.1M259.7 6.1L243.8 6.4M243.8 6.4L227.2 6.8M227.2 6.8L210.0 7.2M210.0 7.2L192.0 7.5M192.0 7.5L173.3 7.9M173.3 7.9L153.7 8.4M153.7 8.4L133.2 8.8M133.2 8.8L111.8 9.3M111.8 9.3L89.3 9.7M89.3 9.7L65.7 10.2M65.7 10.2L41.0 10.8M41.0 10.8L15.0 11.3M15.0 11.3L-12.4 11.9M358.0 1.1L365.9 1.4M365.9 1.4L374.1 1.7M374.1 1.7L382.7 1.9M382.7 1.9L391.7 2.2M391.7 2.2L401.1 2.5M401.1 2.5L411.0 2.9M411.0 2.9L421.3 3.2M421.3 3.2L432.2 3.6M432.2 3.6L443.6 3.9M443.6 3.9L455.7 4.3M455.7 4.3L468.4 4.7M468.4 4.7L481.7 5.2M481.7 5.2L495.9 5.6M495.9 5.6L510.9 6.1M510.9 6.1L526.8 6.6M526.8 6.6L543.7 7.2M543.7 7.2L561.7 7.8M561.7 7.8L580.9 8.4M580.9 8.4L601.5 9.1M601.5 9.1L623.5 9.8M623.5 9.8L647.2 10.5M486.0 1.8L477.6 1.9M477.6 1.9L468.9 2.1M468.9 2.1L460.0 2.3M460.0 2.3L450.8 2.5M450.8 2.5L441.3 2.8M441.3 2.8L431.5 3.0M431.5 3.0L421.3 3.2M421.3 3.2L410.9 3.4M410.9 3.4L400.1 3.7M400.1 3.7L388.9 3.9M388.9 3.9L377.3 4.2M377.3 4.2L365.4 4.4M365.4 4.4L352.9 4.7M352.9 4.7L340.1 5.0M340.1 5.0L326.7 5.3M326.7 5.3L312.9 5.6M312.9 5.6L298.5 5.9M298.5 5.9L283.5 6.3M283.5 6.3L267.9 6.6M267.9 6.6L251.7 7.0M251.7 7.0L234.8 7.4M234.8 7.4L217.2 7.7M217.2 7.7L198.8 8.2M198.8 8.2L179.5 8.6M179.5 8.6L159.4 9.0M159.4 9.0L138.3 9.5M138.3 9.5L116.2 10.0M116.2 10.0L93.0 10.5M93.0 10.5L68.7 11.1M68.7 11.1L43.1 11.6M43.1 11.6L16.1 12.2M16.1 12.2L-12.4 12.9M348.2 1.3L356.0 1.6M356.0 1.6L364.1 1.8M364.1 1.8L372.6 2.1M372.6 2.1L381.5 2.4M381.5 2.4L390.9 2.8M390.9 2.8L400.6 3.1M400.6 3.1L410.9 3.4M410.9 3.4L421.7 3.8M421.7 3.8L433.0 4.2M433.0 4.2L445.0 4.6M445.0 4.6L457.6 5.0M457.6 5.0L470.9 5.5M470.9 5.5L485.1 5.9M485.1 5.9L500.0 6.4M500.0 6.4L515.9 7.0M515.9 7.0L532.9 7.6M532.9 7.6L550.9 8.2M550.9 8.2L570.2 8.8M570.2 8.8L590.8 9.5M590.8 9.5L613.0 10.3M613.0 10.3L636.9 11.1M636.9 11.1L662.6 12.0M497.2 2.0L488.7 2.2M488.7 2.2L480.0 2.4M480.0 2.4L471.1 2.6M471.1 2.6L461.8 2.9M461.8 2.9L452.3 3.1M452.3 3.1L442.4 3.3M442.4 3.3L432.2 3.6M432.2 3.6L421.7 3.8M421.7 3.8L410.8 4.0M410.8 4.0L399.5 4.3M399.5 4.3L387.8 4.6M387.8 4.6L375.7 4.9M375.7 4.9L363.1 5.2M363.1 5.2L350.1 5.5M350.1 5.5L336.5 5.8M336.5 5.8L322.4 6.1M322.4 6.1L307.8 6.4M307.8 6.4L292.6 6.8M292.6 6.8L276.7 7.2M276.7 7.2L260.1 7.5M260.1 7.5L242.9 7.9M242.9 7.9L224.8 8.4M224.8 8.4L206.0 8.8M206.0 8.8L186.2 9.3M186.2 9.3L165.5 9.7M165.5 9.7L143.8 10.2M143.8 10.2L121.0 10.8M121.0 10.8L97.1 11.3M97.1 11.3L71.9 11.9M71.9 11.9L45.3 12.5M45.3 12.5L17.2 13.2M17.2 13.2L-12.5 13.9M338.1 1.5L345.8 1.8M345.8 1.8L353.8 2.0M353.8 2.0L362.2 2.3M362.2 2.3L371.0 2.6M371.0 2.6L380.2 3.0M380.2 3.0L389.9 3.3M389.9 3.3L400.1 3.7M400.1 3.7L410.8 4.0M410.8 4.0L422.0 4.4M422.0 4.4L433.9 4.9M433.9 4.9L446.4 5.3M446.4 5.3L459.7 5.8M459.7 5.8L473.8 6.3M473.8 6.3L488.7 6.8M488.7 6.8L504.6 7.4M504.6 7.4L521.5 8.0M521.5 8.0L539.6 8.6M539.6 8.6L558.9 9.3M558.9 9.3L579.7 10.0M579.7 10.0L602.0 10.8M602.0 10.8L626.0 11.7M626.0 11.7L652.0 12.6M508.9 2.3L500.4 2.5M500.4 2.5L491.7 2.8M491.7 2.8L482.7 3.0M482.7 3.0L473.4 3.2M473.4 3.2L463.8 3.4M463.8 3.4L453.9 3.7M453.9 3.7L443.6 3.9M443.6 3.9L433.0 4.2M433.0 4.2L422.0 4.4M422.0 4.4L410.6 4.7M410.6 4.7L398.8 5.0M398.8 5.0L386.6 5.3M386.6 5.3L373.9 5.6M373.9 5.6L360.6 5.9M360.6 5.9L346.9 6.3M346.9 6.3L332.6 6.6M332.6 6.6L317.7 7.0M317.7 7.0L302.2 7.4M302.2 7.4L286.0 7.7M286.0 7.7L269.1 8.2M269.1 8.2L251.5 8.6M251.5 8.6L233.0 9.0M233.0 9.0L213.7 9.5M213.7 9.5L193.4 10.0M193.4 10.0L172.1 10.5M172.1 10.5L149.8 11.1M149.8 11.1L126.2 11.6M126.2 11.6L101.4 12.2M101.4 12.2L75.3 12.9M75.3 12.9L47.7 13.5M47.7 13.5L18.5 14.2M18.5 14.2L-12.5 15.0M327.8 1.7L335.3 1.9M335.3 1.9L343.2 2.2M343.2 2.2L351.5 2.5M351.5 2.5L360.2 2.9M360.2 2.9L369.3 3.2M369.3 3.2L378.8 3.5M378.8 3.5L388.9 3.9M388.9 3.9L399.5 4.3M399.5 4.3L410.6 4.7M410.6 4.7L422.4 5.2M422.4 5.2L434.9 5.6M434.9 5.6L448.1 6.1M448.1 6.1L462.1 6.6M462.1 6.6L476.9 7.2M476.9 7.2L492.8 7.8M492.8 7.8L509.7 8.4M509.7 8.4L527.7 9.1M527.7 9.1L547.1 9.8M547.1 9.8L567.9 10.5M567.9 10.5L590.4 11.4M590.4 11.4L614.6 12.3M614.6 12.3L640.9 13.2M521.1 2.6L512.7 2.9M512.7 2.9L503.9 3.1M503.9 3.1L494.9 3.3M494.9 3.3L485.6 3.6M485.6 3.6L476.0 3.8M476.0 3.8L466.0 4.1M466.0 4.1L455.7 4.3M455.7 4.3L445.0 4.6M445.0 4.6L433.9 4.9M433.9 4.9L422.4 5.2M422.4 5.2L410.5 5.5M410.5 5.5L398.1 5.8M398.1 5.8L385.2 6.1M385.2 6.1L371.9 6.4M371.9 6.4L357.9 6.8M357.9 6.8L343.4 7.2M343.4 7.2L328.3 7.6M328.3 7.6L312.5 8.0M312.5 8.0L296.0 8.4M296.0 8.4L278.7 8.8M278.7 8.8L260.7 9.3M260.7 9.3L241.8 9.7M241.8 9.7L221.9 10.3M221.9 10.3L201.1 10.8M201.1 10.8L179.2 11.3M179.2 11.3L156.2 11.9M156.2 11.9L131.8 12.5M131.8 12.5L106.2 13.2M106.2 13.2L79.0 13.9M79.0 13.9L50.3 14.6M50.3 14.6L19.8 15.4M19.8 15.4L-12.6 16.2M317.1 1.8L324.5 2.1M324.5 2.1L332.3 2.4M332.3 2.4L340.5 2.8M340.5 2.8L349.0 3.1M349.0 3.1L358.0 3.4M358.0 3.4L367.4 3.8M367.4 3.8L377.3 4.2M377.3 4.2L387.8 4.6M387.8 4.6L398.8 5.0M398.8 5.0L410.5 5.5M410.5 5.5L422.8 5.9M422.8 5.9L435.9 6.4M435.9 6.4L449.8 7.0M449.8 7.0L464.6 7.6M464.6 7.6L480.4 8.2M480.4 8.2L497.3 8.8M497.3 8.8L515.3 9.5M515.3 9.5L534.7 10.3M534.7 10.3L555.6 11.1M555.6 11.1L578.1 12.0M578.1 12.0L602.5 12.9M602.5 12.9L629.0 13.9M629.0 13.9L657.9 15.0M534.0 3.0L525.5 3.2M525.5 3.2L516.8 3.4M516.8 3.4L507.7 3.7M507.7 3.7L498.4 3.9M498.4 3.9L488.7 4.2M488.7 4.2L478.7 4.4M478.7 4.4L468.4 4.7M468.4 4.7L457.6 5.0M457.6 5.0L446.4 5.3M446.4 5.3L434.9 5.6M434.9 5.6L422.8 5.9M422.8 5.9L410.3 6.3M410.3 6.3L397.3 6.6M397.3 6.6L383.8 7.0M383.8 7.0L369.7 7.4M369.7 7.4L354.9 7.8M354.9 7.8L339.5 8.2M339.5 8.2L323.5 8.6M323.5 8.6L306.7 9.0M306.7 9.0L289.0 9.5M289.0 9.5L270.6 10.0M270.6 10.0L251.2 10.5M251.2 10.5L230.9 11.1M230.9 11.1L209.4 11.6M209.4 11.6L186.9 12.2M186.9 12.2L163.1 12.9M163.1 12.9L137.9 13.5M137.9 13.5L111.3 14.2M111.3 14.2L83.1 15.0M83.1 15.0L53.2 15.8M53.2 15.8L21.3 16.7M21.3 16.7L-12.6 17.6M306.1 2.0L313.4 2.3M313.4 2.3L321.0 2.6M321.0 2.6L329.0 3.0M329.0 3.0L337.4 3.3M337.4 3.3L346.3 3.7M346.3 3.7L355.6 4.0M355.6 4.0L365.4 4.4M365.4 4.4L375.7 4.9M375.7 4.9L386.6 5.3M386.6 5.3L398.1 5.8M398.1 5.8L410.3 6.3M410.3 6.3L423.3 6.8M423.3 6.8L437.1 7.4M437.1 7.4L451.8 8.0M451.8 8.0L467.5 8.6M467.5 8.6L484.3 9.3M484.3 9.3L502.3 10.0M502.3 10.0L521.7 10.8M521.7 10.8L542.6 11.7M542.6 11.7L565.3 12.6M565.3 12.6L589.8 13.6M589.8 13.6L616.5 14.7M616.5 14.7L645.7 15.8M547.4 3.3L539.0 3.6M539.0 3.6L530.3 3.8M530.3 3.8L521.2 4.1M521.2 4.1L511.9 4.3M511.9 4.3L502.2 4.6M502.2 4.6L492.2 4.9M492.2 4.9L481.7 5.2M481.7 5.2L470.9 5.5M470.9 5.5L459.7 5.8M459.7 5.8L448.1 6.1M448.1 6.1L435.9 6.4M435.9 6.4L423.3 6.8M423.3 6.8L410.2 7.2M410.2 7.2L396.4 7.6M396.4 7.6L382.1 8.0M382.1 8.0L367.2 8.4M367.2 8.4L351.6 8.8M351.6 8.8L335.2 9.3M335.2 9.3L318.1 9.8M318.1 9.8L300.1 10.3M300.1 10.3L281.2 10.8M281.2 10.8L261.4 11.3M261.4 11.3L240.5 11.9M240.5 11.9L218.4 12.5M218.4 12.5L195.2 13.2M195.2 13.2L170.6 13.9M170.6 13.9L144.6 14.6M144.6 14.6L116.9 15.4M116.9 15.4L87.6 16.2M87.6 16.2L56.3 17.1M56.3 17.1L23.0 18.0M23.0 18.0L-12.7 19.0M294.8 2.2L301.9 2.5M301.9 2.5L309.4 2.9M309.4 2.9L317.3 3.2M317.3 3.2L325.5 3.5M325.5 3.5L334.2 3.9M334.2 3.9L343.3 4.3M343.3 4.3L352.9 4.7M352.9 4.7L363.1 5.2M363.1 5.2L373.9 5.6M373.9 5.6L385.2 6.1M385.2 6.1L397.3 6.6M397.3 6.6L410.2 7.2M410.2 7.2L423.8 7.8M423.8 7.8L438.4 8.4M438.4 8.4L454.0 9.0M454.0 9.0L470.7 9.8M470.7 9.8L488.7 10.5M488.7 10.5L508.1 11.4M508.1 11.4L529.0 12.3M529.0 12.3L551.6 13.2M551.6 13.2L576.3 14.3M576.3 14.3L603.2 15.4M603.2 15.4L632.7 16.7M632.7 16.7L665.2 18.1M561.6 3.7L553.2 3.9M553.2 3.9L544.4 4.2M544.4 4.2L535.4 4.5M535.4 4.5L526.1 4.7M526.1 4.7L516.4 5.0M516.4 5.0L506.3 5.3M506.3 5.3L495.9 5.6M495.9 5.6L485.1 5.9M485.1 5.9L473.8 6.3M473.8 6.3L462.1 6.6M462.1 6.6L449.8 7.0M449.8 7.0L437.1 7.4M437.1 7.4L423.8 7.8M423.8 7.8L410.0 8.2M410.0 8.2L395.5 8.6M395.5 8.6L380.3 9.0M380.3 9.0L364.4 9.5M364.4 9.5L347.8 10.0M347.8 10.0L330.3 10.5M330.3 10.5L312.0 11.1M312.0 11.1L292.7 11.6M292.7 11.6L272.3 12.2M272.3 12.2L250.9 12.9M250.9 12.9L228.2 13.5M228.2 13.5L204.2 14.3M204.2 14.3L178.8 15.0M178.8 15.0L151.8 15.8M151.8 15.8L123.1 16.7M123.1 16.7L92.5 17.6M92.5 17.6L59.8 18.5M59.8 18.5L24.8 19.6M24.8 19.6L-12.8 20.7M283.1 2.4L290.1 2.7M290.1 2.7L297.4 3.1M297.4 3.1L305.1 3.4M305.1 3.4L313.2 3.8M313.2 3.8L321.7 4.2M321.7 4.2L330.6 4.6M330.6 4.6L340.1 5.0M340.1 5.0L350.1 5.5M350.1 5.5L360.6 5.9M360.6 5.9L371.9 6.4M371.9 6.4L383.8 7.0M383.8 7.0L396.4 7.6M396.4 7.6L410.0 8.2M410.0 8.2L424.4 8.8M424.4 8.8L439.9 9.5M439.9 9.5L456.5 10.3M456.5 10.3L474.4 11.1M474.4 11.1L493.7 11.9M493.7 11.9L514.6 12.9M514.6 12.9L537.3 13.9M537.3 13.9L562.0 15.0M562.0 15.0L589.1 16.3M589.1 16.3L618.9 17.6M618.9 17.6L651.7 19.1M576.5 4.1L568.1 4.3M568.1 4.3L559.4 4.6M559.4 4.6L550.4 4.9M550.4 4.9L541.1 5.2M541.1 5.2L531.4 5.5M531.4 5.5L521.4 5.8M521.4 5.8L510.9 6.1M510.9 6.1L500.0 6.4M500.0 6.4L488.7 6.8M488.7 6.8L476.9 7.2M476.9 7.2L464.6 7.6M464.6 7.6L451.8 8.0M451.8 8.0L438.4 8.4M438.4 8.4L424.4 8.8M424.4 8.8L409.8 9.3M409.8 9.3L394.4 9.8M394.4 9.8L378.3 10.3M378.3 10.3L361.4 10.8M361.4 10.8L343.6 11.3M343.6 11.3L324.8 11.9M324.8 11.9L305.1 12.6M305.1 12.6L284.2 13.2M284.2 13.2L262.2 13.9M262.2 13.9L238.9 14.6M238.9 14.6L214.1 15.4M214.1 15.4L187.8 16.2M187.8 16.2L159.8 17.1M159.8 17.1L129.9 18.0M129.9 18.0L97.9 19.0M97.9 19.0L63.6 20.1M63.6 20.1L26.8 21.3M26.8 21.3L-12.8 22.5M271.0 2.6L277.8 3.0M277.8 3.0L285.0 3.3M285.0 3.3L292.5 3.7M292.5 3.7L300.4 4.0M300.4 4.0L308.7 4.4M308.7 4.4L317.5 4.9M317.5 4.9L326.7 5.3M326.7 5.3L336.5 5.8M336.5 5.8L346.9 6.3M346.9 6.3L357.9 6.8M357.9 6.8L369.7 7.4M369.7 7.4L382.1 8.0M382.1 8.0L395.5 8.6M395.5 8.6L409.8 9.3M409.8 9.3L425.1 10.0M425.1 10.0L441.5 10.8M441.5 10.8L459.3 11.6M459.3 11.6L478.5 12.6M478.5 12.6L499.3 13.6M499.3 13.6L522.0 14.6M522.0 14.6L546.8 15.8M546.8 15.8L574.0 17.1M574.0 17.1L604.1 18.6M604.1 18.6L637.3 20.2M637.3 20.2L674.4 21.9M592.2 4.5L583.8 4.7M583.8 4.7L575.2 5.0M575.2 5.0L566.2 5.3M566.2 5.3L557.0 5.6M557.0 5.6L547.3 5.9M547.3 5.9L537.3 6.3M537.3 6.3L526.8 6.6M526.8 6.6L515.9 7.0M515.9 7.0L504.6 7.4M504.6 7.4L492.8 7.8M492.8 7.8L480.4 8.2M480.4 8.2L467.5 8.6M467.5 8.6L454.0 9.0M454.0 9.0L439.9 9.5M439.9 9.5L425.1 10.0M425.1 10.0L409.5 10.5M409.5 10.5L393.2 11.1M393.2 11.1L376.0 11.6M376.0 11.6L357.9 12.2M357.9 12.2L338.7 12.9M338.7 12.9L318.5 13.6M318.5 13.6L297.2 14.3M297.2 14.3L274.5 15.0M274.5 15.0L250.5 15.8M250.5 15.8L224.9 16.7M224.9 16.7L197.6 17.6M197.6 17.6L168.5 18.5M168.5 18.5L137.3 19.6M137.3 19.6L103.9 20.7M103.9 20.7L67.9 21.9M67.9 21.9L29.1 23.2M29.1 23.2L-12.9 24.6M258.6 2.9L265.2 3.2M265.2 3.2L272.2 3.5M272.2 3.5L279.5 3.9M279.5 3.9L287.2 4.3M287.2 4.3L295.3 4.7M295.3 4.7L303.8 5.2M303.8 5.2L312.9 5.6M312.9 5.6L322.4 6.1M322.4 6.1L332.6 6.6M332.6 6.6L343.4 7.2M343.4 7.2L354.9 7.8M354.9 7.8L367.2 8.4M367.2 8.4L380.3 9.0M380.3 9.0L394.4 9.8M394.4 9.8L409.5 10.5M409.5 10.5L425.8 11.4M425.8 11.4L443.4 12.2M443.4 12.2L462.5 13.2M462.5 13.2L483.2 14.3M483.2 14.3L505.9 15.4M505.9 15.4L530.7 16.7M530.7 16.7L558.0 18.1M558.0 18.1L588.2 19.6M588.2 19.6L621.8 21.3M621.8 21.3L659.4 23.2M608.7 4.9L600.4 5.2M600.4 5.2L591.9 5.5M591.9 5.5L583.0 5.8M583.0 5.8L573.8 6.1M573.8 6.1L564.1 6.5M564.1 6.5L554.1 6.8M554.1 6.8L543.7 7.2M543.7 7.2L532.9 7.6M532.9 7.6L521.5 8.0M521.5 8.0L509.7 8.4M509.7 8.4L497.3 8.8M497.3 8.8L484.3 9.3M484.3 9.3L470.7 9.8M470.7 9.8L456.5 10.3M456.5 10.3L441.5 10.8M441.5 10.8L425.8 11.4M425.8 11.4L409.2 11.9M409.2 11.9L391.8 12.6M391.8 12.6L373.3 13.2M373.3 13.2L353.8 13.9M353.8 13.9L333.2 14.6M333.2 14.6L311.3 15.4M311.3 15.4L288.0 16.2M288.0 16.2L263.2 17.1M263.2 17.1L236.8 18.1M236.8 18.1L208.5 19.1M208.5 19.1L178.2 20.1M178.2 20.1L145.7 21.3M145.7 21.3L110.6 22.5M110.6 22.5L72.7 23.9M72.7 23.9L31.6 25.3M31.6 25.3L-13.0 26.9M245.8 3.1L252.2 3.4M252.2 3.4L258.9 3.8M258.9 3.8L266.0 4.2M266.0 4.2L273.5 4.6M273.5 4.6L281.3 5.0M281.3 5.0L289.7 5.5M289.7 5.5L298.5 5.9M298.5 5.9L307.8 6.4M307.8 6.4L317.7 7.0M317.7 7.0L328.3 7.6M328.3 7.6L339.5 8.2M339.5 8.2L351.6 8.8M351.6 8.8L364.4 9.5M364.4 9.5L378.3 10.3M378.3 10.3L393.2 11.1M393.2 11.1L409.2 11.9M409.2 11.9L426.6 12.9M426.6 12.9L445.5 13.9M445.5 13.9L466.1 15.0M466.1 15.0L488.7 16.2M488.7 16.2L513.5 17.6M513.5 17.6L540.8 19.1M540.8 19.1L571.2 20.7M571.2 20.7L605.1 22.6M605.1 22.6L643.2 24.6M626.2 5.3L618.0 5.6M618.0 5.6L609.6 5.9M609.6 5.9L600.7 6.3M600.7 6.3L591.6 6.6M591.6 6.6L582.0 7.0M582.0 7.0L572.1 7.4M572.1 7.4L561.7 7.8M561.7 7.8L550.9 8.2M550.9 8.2L539.6 8.6M539.6 8.6L527.7 9.1M527.7 9.1L515.3 9.5M515.3 9.5L502.3 10.0M502.3 10.0L488.7 10.5M488.7 10.5L474.4 11.1M474.4 11.1L459.3 11.6M459.3 11.6L443.4 12.2M443.4 12.2L426.6 12.9M426.6 12.9L408.9 13.6M408.9 13.6L390.2 14.3M390.2 14.3L370.3 15.0M370.3 15.0L349.2 15.8M349.2 15.8L326.8 16.7M326.8 16.7L302.9 17.6M302.9 17.6L277.3 18.5M277.3 18.5L250.0 19.6M250.0 19.6L220.6 20.7M220.6 20.7L189.1 21.9M189.1 21.9L155.0 23.2M155.0 23.2L118.1 24.6M118.1 24.6L78.1 26.1M78.1 26.1L34.5 27.8M34.5 27.8L-13.1 29.6M232.5 3.3L238.7 3.7M238.7 3.7L245.2 4.0M245.2 4.0L252.0 4.4M252.0 4.4L259.3 4.9M259.3 4.9L266.9 5.3M266.9 5.3L274.9 5.8M274.9 5.8L283.5 6.3M283.5 6.3L292.6 6.8M292.6 6.8L302.2 7.4M302.2 7.4L312.5 8.0M312.5 8.0L323.5 8.6M323.5 8.6L335.2 9.3M335.2 9.3L347.8 10.0M347.8 10.0L361.4 10.8M361.4 10.8L376.0 11.6M376.0 11.6L391.8 12.6M391.8 12.6L408.9 13.6M408.9 13.6L427.6 14.6M427.6 14.6L448.0 15.8M448.0 15.8L470.4 17.1M470.4 17.1L495.1 18.6M495.1 18.6L522.4 20.2M522.4 20.2L552.9 21.9M552.9 21.9L587.1 23.9M587.1 23.9L625.7 26.2M625.7 26.2L669.6 28.7M644.7 5.8L636.6 6.1M636.6 6.1L628.3 6.5M628.3 6.5L619.6 6.8M619.6 6.8L610.5 7.2M610.5 7.2L601.1 7.6M601.1 7.6L591.2 8.0M591.2 8.0L580.9 8.4M580.9 8.4L570.2 8.8M570.2 8.8L558.9 9.3M558.9 9.3L547.1 9.8M547.1 9.8L534.7 10.3M534.7 10.3L521.7 10.8M521.7 10.8L508.1 11.4M508.1 11.4L493.7 11.9M493.7 11.9L478.5 12.6M478.5 12.6L462.5 13.2M462.5 13.2L445.5 13.9M445.5 13.9L427.6 14.6M427.6 14.6L408.6 15.4M408.6 15.4L388.3 16.2M388.3 16.2L366.8 17.1M366.8 17.1L343.8 18.1M343.8 18.1L319.2 19.1M319.2 19.1L292.9 20.1M292.9 20.1L264.6 21.3M264.6 21.3L234.1 22.5M234.1 22.5L201.2 23.9M201.2 23.9L165.5 25.3M165.5 25.3L126.7 26.9M126.7 26.9L84.3 28.6M84.3 28.6L37.8 30.5M218.8 3.5L224.8 3.9M224.8 3.9L231.0 4.3M231.0 4.3L237.6 4.7M237.6 4.7L244.5 5.2M244.5 5.2L251.9 5.6M251.9 5.6L259.7 6.1M259.7 6.1L267.9 6.6M267.9 6.6L276.7 7.2M276.7 7.2L286.0 7.7M286.0 7.7L296.0 8.4M296.0 8.4L306.7 9.0M306.7 9.0L318.1 9.8M318.1 9.8L330.3 10.5M330.3 10.5L343.6 11.3M343.6 11.3L357.9 12.2M357.9 12.2L373.3 13.2M373.3 13.2L390.2 14.3M390.2 14.3L408.6 15.4M408.6 15.4L428.7 16.7M428.7 16.7L450.9 18.1M450.9 18.1L475.4 19.6M475.4 19.6L502.7 21.3M502.7 21.3L533.2 23.2M533.2 23.2L567.6 25.4M567.6 25.4L606.5 27.8M606.5 27.8L651.2 30.6M639.6 7.4L630.7 7.8M630.7 7.8L621.4 8.2M621.4 8.2L611.7 8.6M611.7 8.6L601.5 9.1M601.5 9.1L590.8 9.5M590.8 9.5L579.7 10.0M579.7 10.0L567.9 10.5M567.9 10.5L555.6 11.1M555.6 11.1L542.6 11.7M542.6 11.7L529.0 12.3M529.0 12.3L514.6 12.9M514.6 12.9L499.3 13.6M499.3 13.6L483.2 14.3M483.2 14.3L466.1 15.0M466.1 15.0L448.0 15.8M448.0 15.8L428.7 16.7M428.7 16.7L408.1 17.6M408.1 17.6L386.2 18.6M386.2 18.6L362.7 19.6M362.7 19.6L337.4 20.7M337.4 20.7L310.3 21.9M310.3 21.9L281.0 23.2M281.0 23.2L249.3 24.6M249.3 24.6L214.9 26.1M204.7 3.8L210.4 4.2M210.4 4.2L216.3 4.6M216.3 4.6L222.6 5.0M222.6 5.0L229.3 5.5M229.3 5.5L236.3 5.9M236.3 5.9L243.8 6.4M243.8 6.4L251.7 7.0M251.7 7.0L260.1 7.5M260.1 7.5L269.1 8.2M269.1 8.2L278.7 8.8M278.7 8.8L289.0 9.5M289.0 9.5L300.1 10.3M300.1 10.3L312.0 11.1M312.0 11.1L324.8 11.9M324.8 11.9L338.7 12.9M338.7 12.9L353.8 13.9M353.8 13.9L370.3 15.0M370.3 15.0L388.3 16.2M388.3 16.2L408.1 17.6M408.1 17.6L430.0 19.1M430.0 19.1L454.3 20.7M454.3 20.7L481.4 22.6M481.4 22.6L511.8 24.6M511.8 24.6L546.3 27.0M546.3 27.0L585.6 29.6M585.6 29.6L630.9 32.7M643.1 8.8L633.5 9.3M633.5 9.3L623.5 9.8M623.5 9.8L613.0 10.3M613.0 10.3L602.0 10.8M602.0 10.8L590.4 11.4M590.4 11.4L578.1 12.0M578.1 12.0L565.3 12.6M565.3 12.6L551.6 13.2M551.6 13.2L537.3 13.9M537.3 13.9L522.0 14.6M522.0 14.6L505.9 15.4M505.9 15.4L488.7 16.2M488.7 16.2L470.4 17.1M470.4 17.1L450.9 18.1M450.9 18.1L430.0 19.1M430.0 19.1L407.6 20.1M407.6 20.1L383.6 21.3M383.6 21.3L357.7 22.5M357.7 22.5L329.7 23.9M329.7 23.9L299.4 25.3M190.1 4.0L195.4 4.4M195.4 4.4L201.1 4.9M201.1 4.9L207.1 5.3M207.1 5.3L213.4 5.8M213.4 5.8L220.1 6.3M220.1 6.3L227.2 6.8M227.2 6.8L234.8 7.4M234.8 7.4L242.9 7.9M242.9 7.9L251.5 8.6M251.5 8.6L260.7 9.3M260.7 9.3L270.6 10.0M270.6 10.0L281.2 10.8M281.2 10.8L292.7 11.6M292.7 11.6L305.1 12.6M305.1 12.6L318.5 13.6M318.5 13.6L333.2 14.6M333.2 14.6L349.2 15.8M349.2 15.8L366.8 17.1M366.8 17.1L386.2 18.6M386.2 18.6L407.6 20.1M407.6 20.1L431.6 21.9M431.6 21.9L458.4 23.9M458.4 23.9L488.7 26.1M488.7 26.1L523.1 28.7M647.2 10.5L636.9 11.1M636.9 11.1L626.0 11.7M626.0 11.7L614.6 12.3M614.6 12.3L602.5 12.9M602.5 12.9L589.8 13.6M589.8 13.6L576.3 14.3M576.3 14.3L562.0 15.0M562.0 15.0L546.8 15.8M546.8 15.8L530.7 16.7M530.7 16.7L513.5 17.6M513.5 17.6L495.1 18.6M495.1 18.6L475.4 19.6M475.4 19.6L454.3 20.7M454.3 20.7L431.6 21.9M431.6 21.9L407.0 23.2M407.0 23.2L380.5 24.6M174.9 4.3L179.9 4.7M179.9 4.7L185.3 5.1M185.3 5.1L190.9 5.6M190.9 5.6L196.9 6.1M196.9 6.1L203.2 6.6M203.2 6.6L210.0 7.2M210.0 7.2L217.2 7.7M217.2 7.7L224.8 8.4M224.8 8.4L233.0 9.0M233.0 9.0L241.8 9.7M241.8 9.7L251.2 10.5M251.2 10.5L261.4 11.3M261.4 11.3L272.3 12.2M272.3 12.2L284.2 13.2M284.2 13.2L297.2 14.3M297.2 14.3L311.3 15.4M311.3 15.4L326.8 16.7M326.8 16.7L343.8 18.1M343.8 18.1L362.7 19.6M362.7 19.6L383.6 21.3M383.6 21.3L407.0 23.2M407.0 23.2L433.4 25.4M640.9 13.2L629.0 13.9M629.0 13.9L616.5 14.7M616.5 14.7L603.2 15.4M603.2 15.4L589.1 16.3M589.1 16.3L574.0 17.1M574.0 17.1L558.0 18.1M558.0 18.1L540.8 19.1M540.8 19.1L522.4 20.2M522.4 20.2L502.7 21.3M502.7 21.3L481.4 22.6M481.4 22.6L458.4 23.9M458.4 23.9L433.4 25.4M159.2 4.6L163.9 5.0M163.9 5.0L168.9 5.5M168.9 5.5L174.2 5.9M174.2 5.9L179.8 6.4M179.8 6.4L185.7 7.0M185.7 7.0L192.0 7.5M192.0 7.5L198.8 8.2M198.8 8.2L206.0 8.8M206.0 8.8L213.7 9.5M213.7 9.5L221.9 10.3M221.9 10.3L230.9 11.1M230.9 11.1L240.5 11.9M240.5 11.9L250.9 12.9M250.9 12.9L262.2 13.9M262.2 13.9L274.5 15.0M274.5 15.0L288.0 16.2M288.0 16.2L302.9 17.6M302.9 17.6L319.2 19.1M319.2 19.1L337.4 20.7M337.4 20.7L357.7 22.5M357.7 22.5L380.5 24.6M645.7 15.8L632.7 16.7M632.7 16.7L618.9 17.6M618.9 17.6L604.1 18.6M604.1 18.6L588.2 19.6M588.2 19.6L571.2 20.7M571.2 20.7L552.9 21.9M552.9 21.9L533.2 23.2M533.2 23.2L511.8 24.6M511.8 24.6L488.7 26.1M488.7 26.1L463.4 27.8M142.9 4.9L147.3 5.3M147.3 5.3L151.9 5.8M151.9 5.8L156.7 6.3M156.7 6.3L161.9 6.8M161.9 6.8L167.4 7.3M167.4 7.3L173.3 7.9M173.3 7.9L179.5 8.6M179.5 8.6L186.2 9.3M186.2 9.3L193.4 10.0M193.4 10.0L201.1 10.8M201.1 10.8L209.4 11.6M209.4 11.6L218.4 12.5M218.4 12.5L228.2 13.5M228.2 13.5L238.9 14.6M238.9 14.6L250.5 15.8M250.5 15.8L263.2 17.1M263.2 17.1L277.3 18.5M277.3 18.5L292.9 20.1M292.9 20.1L310.3 21.9M310.3 21.9L329.7 23.9M329.7 23.9L351.7 26.1M651.7 19.1L637.3 20.2M637.3 20.2L621.8 21.3M621.8 21.3L605.1 22.6M605.1 22.6L587.1 23.9M587.1 23.9L567.6 25.4M567.6 25.4L546.3 27.0M546.3 27.0L523.1 28.7M126.0 5.1L130.0 5.6M130.0 5.6L134.2 6.1M134.2 6.1L138.6 6.6M138.6 6.6L143.3 7.2M143.3 7.2L148.3 7.7M148.3 7.7L153.7 8.4M153.7 8.4L159.4 9.0M159.4 9.0L165.5 9.7M165.5 9.7L172.1 10.5M172.1 10.5L179.2 11.3M179.2 11.3L186.9 12.2M186.9 12.2L195.2 13.2M195.2 13.2L204.2 14.3M204.2 14.3L214.1 15.4M214.1 15.4L224.9 16.7M224.9 16.7L236.8 18.1M236.8 18.1L250.0 19.6M250.0 19.6L264.6 21.3M264.6 21.3L281.0 23.2M281.0 23.2L299.4 25.3M643.2 24.6L625.7 26.2M625.7 26.2L606.5 27.8M606.5 27.8L585.6 29.6M108.5 5.4L112.0 5.9M112.0 5.9L115.8 6.4M115.8 6.4L119.7 7.0M119.7 7.0L123.9 7.5M123.9 7.5L128.4 8.2M128.4 8.2L133.2 8.8M133.2 8.8L138.3 9.5M138.3 9.5L143.8 10.2M143.8 10.2L149.8 11.1M149.8 11.1L156.2 11.9M156.2 11.9L163.1 12.9M163.1 12.9L170.6 13.9M170.6 13.9L178.8 15.0M178.8 15.0L187.8 16.2M187.8 16.2L197.6 17.6M197.6 17.6L208.5 19.1M208.5 19.1L220.6 20.7M220.6 20.7L234.1 22.5M234.1 22.5L249.3 24.6M651.2 30.6L630.9 32.7M90.4 5.8L93.4 6.3M93.4 6.3L96.6 6.8M96.6 6.8L100.0 7.3M100.0 7.3L103.7 7.9M103.7 7.9L107.6 8.6M107.6 8.6L111.8 9.3M111.8 9.3L116.2 10.0M116.2 10.0L121.0 10.8M121.0 10.8L126.2 11.6M126.2 11.6L131.8 12.5M131.8 12.5L137.9 13.5M137.9 13.5L144.6 14.6M144.6 14.6L151.8 15.8M151.8 15.8L159.8 17.1M159.8 17.1L168.5 18.5M168.5 18.5L178.2 20.1M178.2 20.1L189.1 21.9M189.1 21.9L201.2 23.9M201.2 23.9L214.9 26.1M71.5 6.1L74.0 6.6M74.0 6.6L76.7 7.2M76.7 7.2L79.5 7.7M79.5 7.7L82.6 8.4M82.6 8.4L85.8 9.0M85.8 9.0L89.3 9.7M89.3 9.7L93.0 10.5M93.0 10.5L97.1 11.3M97.1 11.3L101.4 12.2M101.4 12.2L106.2 13.2M106.2 13.2L111.3 14.2M111.3 14.2L116.9 15.4M116.9 15.4L123.1 16.7M123.1 16.7L129.9 18.0M129.9 18.0L137.3 19.6M137.3 19.6L145.7 21.3M145.7 21.3L155.0 23.2M155.0 23.2L165.5 25.3M165.5 25.3L177.4 27.8M51.8 6.4L53.8 7.0M53.8 7.0L55.8 7.5M55.8 7.5L58.1 8.1M58.1 8.1L60.5 8.8M60.5 8.8L63.0 9.5M63.0 9.5L65.7 10.2M65.7 10.2L68.7 11.1M68.7 11.1L71.9 11.9M71.9 11.9L75.3 12.9M75.3 12.9L79.0 13.9M79.0 13.9L83.1 15.0M83.1 15.0L87.6 16.2M87.6 16.2L92.5 17.6M92.5 17.6L97.9 19.0M97.9 19.0L103.9 20.7M103.9 20.7L110.6 22.5M110.6 22.5L118.1 24.6M118.1 24.6L126.7 26.9M31.3 6.8L32.7 7.3M32.7 7.3L34.1 7.9M34.1 7.9L35.7 8.6M35.7 8.6L37.3 9.3M37.3 9.3L39.1 10.0M39.1 10.0L41.0 10.8M41.0 10.8L43.1 11.6M43.1 11.6L45.3 12.5M45.3 12.5L47.7 13.5M47.7 13.5L50.3 14.6M50.3 14.6L53.2 15.8M53.2 15.8L56.3 17.1M56.3 17.1L59.8 18.5M59.8 18.5L63.6 20.1M63.6 20.1L67.9 21.9M67.9 21.9L72.7 23.9M72.7 23.9L78.1 26.1M78.1 26.1L84.3 28.6M10.0 7.2L10.7 7.7M10.7 7.7L11.5 8.4M11.5 8.4L12.2 9.0M12.2 9.0L13.1 9.7M13.1 9.7L14.0 10.5M14.0 10.5L15.0 11.3M15.0 11.3L16.1 12.2M16.1 12.2L17.2 13.2M17.2 13.2L18.5 14.2M18.5 14.2L19.8 15.4M19.8 15.4L21.3 16.7M21.3 16.7L23.0 18.0M23.0 18.0L24.8 19.6M24.8 19.6L26.8 21.3M26.8 21.3L29.1 23.2M29.1 23.2L31.6 25.3M31.6 25.3L34.5 27.8M34.5 27.8L37.8 30.5" stroke="#8f8b86" stroke-opacity="0.11" stroke-width="1" fill="none"/>
<path d="M37.8 30.5L-13.3 32.6M214.9 26.1L177.4 27.8M177.4 27.8L136.4 29.6M136.4 29.6L91.4 31.6M91.4 31.6L41.7 33.8M41.7 33.8L-13.4 36.2M630.9 32.7L683.6 36.3M299.4 25.3L266.4 26.9M266.4 26.9L230.4 28.7M230.4 28.7L191.0 30.6M191.0 30.6L147.6 32.6M147.6 32.6L99.5 34.9M99.5 34.9L46.1 37.5M46.1 37.5L-13.6 40.4M523.1 28.7L562.6 31.6M562.6 31.6L608.5 35.0M608.5 35.0L662.3 39.0M380.5 24.6L351.7 26.1M351.7 26.1L320.3 27.8M320.3 27.8L286.0 29.6M286.0 29.6L248.3 31.6M248.3 31.6L206.7 33.8M206.7 33.8L160.6 36.2M160.6 36.2L109.2 38.9M109.2 38.9L51.4 42.0M51.4 42.0L-13.8 45.4M433.4 25.4L463.4 27.8M463.4 27.8L497.7 30.6M497.7 30.6L537.3 33.8M537.3 33.8L583.6 37.6M583.6 37.6L638.4 42.0M638.4 42.0L704.3 47.4M433.4 25.4L406.3 26.9M406.3 26.9L376.7 28.7M376.7 28.7L344.3 30.6M344.3 30.6L308.6 32.7M308.6 32.7L269.1 35.0M269.1 35.0L225.1 37.5M225.1 37.5L176.0 40.4M176.0 40.4L120.6 43.6M120.6 43.6L57.8 47.3M57.8 47.3L-14.1 51.5M380.5 24.6L406.3 26.9M406.3 26.9L435.8 29.6M435.8 29.6L469.7 32.7M469.7 32.7L509.1 36.3M509.1 36.3L555.7 40.5M555.7 40.5L611.3 45.5M611.3 45.5L679.1 51.6M463.4 27.8L435.8 29.6M435.8 29.6L405.4 31.6M405.4 31.6L371.9 33.8M371.9 33.8L334.8 36.2M334.8 36.2L293.4 38.9M293.4 38.9L246.9 42.0M246.9 42.0L194.3 45.4M194.3 45.4L134.5 49.4M134.5 49.4L65.6 53.9M65.6 53.9L-14.4 59.1M351.7 26.1L376.7 28.7M376.7 28.7L405.4 31.6M405.4 31.6L438.7 35.0M438.7 35.0L477.8 39.0M477.8 39.0L524.2 43.7M524.2 43.7L580.5 49.4M580.5 49.4L649.9 56.5M523.1 28.7L497.7 30.6M497.7 30.6L469.7 32.7M469.7 32.7L438.7 35.0M438.7 35.0L404.3 37.6M404.3 37.6L365.7 40.4M365.7 40.4L322.3 43.7M322.3 43.7L273.1 47.4M273.1 47.4L216.7 51.6M299.4 25.3L320.3 27.8M320.3 27.8L344.3 30.6M344.3 30.6L371.9 33.8M371.9 33.8L404.3 37.6M404.3 37.6L442.5 42.0M442.5 42.0L488.6 47.4M488.6 47.4L545.0 54.0M545.0 54.0L615.8 62.2M585.6 29.6L562.6 31.6M562.6 31.6L537.3 33.8M537.3 33.8L509.1 36.3M509.1 36.3L477.8 39.0M477.8 39.0L442.5 42.0M442.5 42.0L402.7 45.5M402.7 45.5L357.3 49.4M249.3 24.6L266.4 26.9M266.4 26.9L286.0 29.6M286.0 29.6L308.6 32.7M308.6 32.7L334.8 36.2M334.8 36.2L365.7 40.4M365.7 40.4L402.7 45.5M402.7 45.5L447.8 51.6M630.9 32.7L608.5 35.0M608.5 35.0L583.6 37.6M583.6 37.6L555.7 40.5M555.7 40.5L524.2 43.7M524.2 43.7L488.6 47.4M488.6 47.4L447.8 51.6M214.9 26.1L230.4 28.7M230.4 28.7L248.3 31.6M248.3 31.6L269.1 35.0M269.1 35.0L293.4 38.9M293.4 38.9L322.3 43.7M322.3 43.7L357.3 49.4M662.3 39.0L638.4 42.0M638.4 42.0L611.3 45.5M611.3 45.5L580.5 49.4M580.5 49.4L545.0 54.0M545.0 54.0L503.8 59.2M177.4 27.8L191.0 30.6M191.0 30.6L206.7 33.8M206.7 33.8L225.1 37.5M225.1 37.5L246.9 42.0M246.9 42.0L273.1 47.4M273.1 47.4L305.2 53.9M649.9 56.5L615.8 62.2M126.7 26.9L136.4 29.6M136.4 29.6L147.6 32.6M147.6 32.6L160.6 36.2M160.6 36.2L176.0 40.4M176.0 40.4L194.3 45.4M194.3 45.4L216.7 51.6M84.3 28.6L91.4 31.6M91.4 31.6L99.5 34.9M99.5 34.9L109.2 38.9M109.2 38.9L120.6 43.6M120.6 43.6L134.5 49.4M134.5 49.4L151.6 56.4M37.8 30.5L41.7 33.8M41.7 33.8L46.1 37.5M46.1 37.5L51.4 42.0M51.4 42.0L57.8 47.3M57.8 47.3L65.6 53.9M65.6 53.9L75.4 62.1" stroke="#8f8b86" stroke-opacity="0.23" stroke-width="1" fill="none"/>
<path d="M216.7 51.6L151.6 56.4M151.6 56.4L75.4 62.1M75.4 62.1L-14.8 68.8M615.8 62.2L707.3 72.9M357.3 49.4L305.2 53.9M305.2 53.9L244.5 59.2M244.5 59.2L173.2 65.4M173.2 65.4L88.0 72.7M88.0 72.7L-15.4 81.7M447.8 51.6L503.8 59.2M503.8 59.2L575.4 69.0M575.4 69.0L670.1 81.9M447.8 51.6L400.6 56.5M400.6 56.5L345.4 62.2M345.4 62.2L280.1 68.9M280.1 68.9L201.4 77.0M201.4 77.0L105.0 87.0M357.3 49.4L400.6 56.5M400.6 56.5L455.3 65.4M455.3 65.4L526.8 77.1M526.8 77.1L624.1 93.0M503.8 59.2L455.3 65.4M455.3 65.4L397.4 72.8M397.4 72.8L327.1 81.8M305.2 53.9L345.4 62.2M345.4 62.2L397.4 72.8M397.4 72.8L467.1 87.1M615.8 62.2L575.4 69.0M575.4 69.0L526.8 77.1M526.8 77.1L467.1 87.1M216.7 51.6L244.5 59.2M244.5 59.2L280.1 68.9M280.1 68.9L327.1 81.8M670.1 81.9L624.1 93.0M151.6 56.4L173.2 65.4M173.2 65.4L201.4 77.0M75.4 62.1L88.0 72.7M88.0 72.7L105.0 87.0" stroke="#8f8b86" stroke-opacity="0.34" stroke-width="1" fill="none"/>
<path d="M105.0 87.0L-16.1 99.5M624.1 93.0L764.4 115.9M327.1 81.8L239.9 92.9M239.9 92.9L128.9 107.1M128.9 107.1L-17.2 125.7M467.1 87.1L565.5 107.2M565.5 107.2L714.8 137.7M467.1 87.1L392.2 99.6M327.1 81.8L392.2 99.6M624.1 93.0L565.5 107.2M201.4 77.0L239.9 92.9M239.9 92.9L295.3 115.8M105.0 87.0L128.9 107.1" stroke="#8f8b86" stroke-opacity="0.45" stroke-width="1" fill="none"/>
<path d="M392.2 99.6L295.3 115.8M295.3 115.8L165.1 137.5M392.2 99.6L488.3 125.9M488.3 125.9L644.5 168.6M565.5 107.2L488.3 125.9M128.9 107.1L165.1 137.5" stroke="#8f8b86" stroke-opacity="0.56" stroke-width="1" fill="none"/>
<path d="M165.1 137.5L-19.0 168.3M488.3 125.9L382.1 151.6M295.3 115.8L382.1 151.6M165.1 137.5L226.7 189.3" stroke="#8f8b86" stroke-opacity="0.68" stroke-width="1" fill="none"/>
<path d="M382.1 151.6L226.7 189.3M382.1 151.6L537.3 215.7M644.5 168.6L537.3 215.7" stroke="#8f8b86" stroke-opacity="0.79" stroke-width="1" fill="none"/>
<path d="M226.7 189.3L-22.5 249.6M537.3 215.7L894.8 363.3M537.3 215.7L354.0 296.3M354.0 296.3L-31.7 465.7M226.7 189.3L354.0 296.3M354.0 296.3L774.0 649.3" stroke="#8f8b86" stroke-opacity="0.90" stroke-width="1" fill="none"/>
<path d="M175.5 227L338 183L471 259L273.5 350.5Z" fill="none" stroke="#f07a28" stroke-width="3.4" stroke-linejoin="round"/>
<!-- cube -->
<path d="M368 230.5L385.5 240.8L384.7 263L368 252.7Z" fill="#9a9a9a" stroke="#7a7a7a" stroke-width="0.7"/>
<path d="M385.5 240.8L406 233.7L405.2 256.7L384.7 263Z" fill="#3e4550"/>
<!-- camera icon -->
<path d="M395 289L411.6 282L416.3 284.4L399 291.5Z" fill="#2e3f57"/>
<!-- gizmo -->
<path d="M315.5 242.4V193" stroke="#a8f07a" stroke-width="1.6"/>
<path d="M315.5 242.4L270 258.5" stroke="#e85a50" stroke-width="1.3"/>
<path d="M315.5 242.4L347 266.5" stroke="#5a88f5" stroke-width="1.4"/>
<g transform="translate(315.5 194) rotate(-90)"><path d="M0 -5L14 0L0 5A2 5 0 0 1 0 -5Z" fill="#78e040"/><path d="M0 1.0L14 0L0 5Z" fill="#2a7010" opacity="0.35"/></g>
<g transform="translate(269.5 259.5) rotate(164)"><path d="M0 -4.6L15.6 0L0 4.6A2 4.6 0 0 1 0 -4.6Z" fill="#f0281e"/><path d="M0 0.9199999999999999L15.6 0L0 4.6Z" fill="#801010" opacity="0.35"/></g>
<g transform="translate(346.5 266.3) rotate(39.7)"><path d="M0 -5L15 0L0 5A2 5 0 0 1 0 -5Z" fill="#2466ff"/><path d="M0 1.0L15 0L0 5Z" fill="#102a90" opacity="0.35"/></g>
</svg>
<!-- left toolbar overlay -->
<div class="a" style="left:2px;top:2px;width:32px;height:133px;background:#1e1e1e;border-radius:3px;border:1px solid #101010"></div>
<div class="a" style="left:11.5px;top:6px;width:14px;height:1px;background:#6a6a6a"></div>
<div class="a" style="left:11.5px;top:8.5px;width:14px;height:1px;background:#6a6a6a"></div>
<svg style="left:7px;top:19.5px" width="12" height="12"><path d="M6 0.8L10.8 3.4V8.6L6 11.2L1.2 8.6V3.4Z M1.2 3.4L6 6L10.8 3.4 M6 6V11.2" fill="none" stroke="#d8d8d8" stroke-width="1"/></svg>
<div class="a" style="left:22px;top:24px;border-left:3px solid transparent;border-right:3px solid transparent;border-top:4px solid #d8d8d8"></div>
<div class="a" style="left:4px;top:39px;width:28px;height:15px;background:#4f4f4f;border-radius:2px"></div>
<div class="a" style="left:4px;top:55px;width:28px;height:15px;background:#3d5e87"></div>
<div class="a" style="left:4px;top:71px;width:28px;height:15px;background:#4f4f4f"></div>
<div class="a" style="left:4px;top:87px;width:28px;height:15px;background:#4f4f4f"></div>
<div class="a" style="left:4px;top:103px;width:28px;height:15px;background:#4f4f4f"></div>
<div class="a" style="left:4px;top:119px;width:28px;height:15px;background:#4f4f4f;border-radius:0 0 2px 2px"></div>
<svg style="left:12px;top:40px" width="12" height="13"><path d="M3 8.5V4.2Q3 3.3 3.7 3.3Q4.4 3.3 4.4 4.2V6.5V2Q4.4 1.1 5.1 1.1Q5.8 1.1 5.8 2V6V1.4Q5.8 0.5 6.5 0.5Q7.2 0.5 7.2 1.4V6V2.2Q7.2 1.3 7.9 1.3Q8.6 1.3 8.6 2.2V7.5L9.6 6.2Q10.3 5.4 10.9 5.9Q11.4 6.4 10.8 7.2L8.6 10.5Q7.6 12.2 5.8 12.2Q3 12.2 3 9Z" fill="none" stroke="#e4e4e4" stroke-width="1"/></svg>
<svg style="left:11px;top:56px" width="14" height="13"><path d="M7 1.5V11.5M1.5 6.5H12.5" stroke="#c8dcf0" stroke-width="1"/><path d="M7 0.5L5 2.8H9Z M7 12.5L5 10.2H9Z M0.5 6.5L2.8 4.5V8.5Z M13.5 6.5L11.2 4.5V8.5Z" fill="#c8dcf0"/></svg>
<svg style="left:12px;top:72px" width="12" height="13"><path d="M9.6 3.8A4.5 4.5 0 0 0 1.8 5.2M2.4 9.2A4.5 4.5 0 0 0 10.2 7.8" fill="none" stroke="#d8d8d8" stroke-width="1"/><path d="M10.3 1.2L10.2 4.6L6.9 4Z M1.7 11.8L1.8 8.4L5.1 9Z" fill="#d8d8d8"/></svg>
<svg style="left:12px;top:88px" width="12" height="13"><rect x="1.5" y="1.5" width="9" height="10" fill="none" stroke="#d0d0d0" stroke-width="1"/><rect x="1.5" y="8" width="3" height="3.5" fill="#555" stroke="#d0d0d0" stroke-width="1"/><path d="M5 8L9 4M6 3.8H9.2V7" fill="none" stroke="#d0d0d0" stroke-width="1"/></svg>
<svg style="left:12px;top:104px" width="12" height="13"><path d="M2 4V9M10 4V9M4 2H8M4 11H8" stroke="#d0d0d0" stroke-width="1" stroke-dasharray="1.2 1"/><rect x="0.8" y="0.8" width="2" height="2" fill="#d0d0d0"/><rect x="9.2" y="0.8" width="2" height="2" fill="#d0d0d0"/><rect x="0.8" y="10.2" width="2" height="2" fill="#d0d0d0"/><rect x="9.2" y="10.2" width="2" height="2" fill="#d0d0d0"/></svg>
<svg style="left:11px;top:120px" width="14" height="13"><circle cx="7" cy="6.5" r="4.6" fill="none" stroke="#d8d8d8" stroke-width="0.9" stroke-dasharray="1.6 1.1"/><path d="M7 2.8V10.2M3.3 6.5H10.7" stroke="#d8d8d8" stroke-width="0.9"/><path d="M7 1.8L5.8 3.3H8.2Z M7 11.2L5.8 9.7H8.2Z M2.3 6.5L3.8 5.3V7.7Z M11.7 6.5L10.2 5.3V7.7Z" fill="#d8d8d8"/><path d="M11 2.5L13 0.5M12 0.5H13V1.5M3 10.5L1 12.5M1 11.5V12.5H2" fill="none" stroke="#d8d8d8" stroke-width="0.9"/></svg>
<!-- top handle + orientation gizmo -->
<div class="a" style="left:552px;top:7px;width:12px;height:1px;background:#5e6262"></div>
<div class="a" style="left:552px;top:10px;width:12px;height:1px;background:#5e6262"></div>
<svg style="left:560px;top:10px" width="70" height="72"><text x="29" y="8.5" font-family="Liberation Sans" font-size="9.5" fill="#e8e8e8" text-anchor="middle">y</text><text x="3" y="44" font-family="Liberation Sans" font-size="9.5" fill="#e8e8e8" text-anchor="middle">x</text><text x="50.5" y="52.5" font-family="Liberation Sans" font-size="9.5" fill="#e8e8e8" text-anchor="middle">z</text><g transform="translate(19.1 25.4) rotate(39.6)"><path d="M0 -3.6L12.7 0L0 3.6A1.6 3.6 0 0 1 0 -3.6Z" fill="#d8d8d8"/><path d="M0 0.4L12.7 0L0 3.6A1.6 3.6 0 0 1 -1.4 1.8Z" fill="#707070" opacity="0.3"/></g><g transform="translate(43.5 27.7) rotate(158.3)"><path d="M0 -3.8L15.7 0L0 3.8A1.7 3.8 0 0 1 0 -3.8Z" fill="#d8d8d8"/><path d="M0 0.4L15.7 0L0 3.8A1.7 3.8 0 0 1 -1.5 1.9Z" fill="#707070" opacity="0.3"/></g><g transform="translate(28.6 47.5) rotate(-88.8)"><path d="M0 -3.8L14.0 0L0 3.8A1.7 3.8 0 0 1 0 -3.8Z" fill="#dcdcdc"/><path d="M0 0.4L14.0 0L0 3.8A1.7 3.8 0 0 1 -1.5 1.9Z" fill="#707070" opacity="0.3"/></g><path d="M23 28.5L29 26L35 28.5L35 36.5L29 39.5L23 36.5Z" fill="#d4d4d4"/><path d="M29 31V39.5M23 28.5L29 31L35 28.5" stroke="#b8b8b8" stroke-width="0.6" fill="none"/><g transform="translate(28.9 11.8) rotate(90.0)"><path d="M0 -5.6L17 0L0 5.6A2.5 5.6 0 0 1 0 -5.6Z" fill="#7fd44a"/><path d="M0 0.6L17 0L0 5.6A2.5 5.6 0 0 1 -2.2 2.8Z" fill="#2a6010" opacity="0.3"/></g><g transform="translate(8.8 39.2) rotate(-19.7)"><path d="M0 -5.4L14.9 0L0 5.4A2.4 5.4 0 0 1 0 -5.4Z" fill="#dc4a3a"/><path d="M0 0.5L14.9 0L0 5.4A2.4 5.4 0 0 1 -2.2 2.7Z" fill="#701010" opacity="0.3"/></g><g transform="translate(45.0 45.2) rotate(-141.3)"><path d="M0 -5.5L14.7 0L0 5.5A2.5 5.5 0 0 1 0 -5.5Z" fill="#3e6fe0"/><path d="M0 0.6L14.7 0L0 5.5A2.5 5.5 0 0 1 -2.2 2.8Z" fill="#102a80" opacity="0.3"/></g></svg>
<svg style="left:610px;top:14.5px" width="9" height="9"><path d="M2 4V2.8Q4.5 0.2 7 2.8" fill="none" stroke="#e0e0e0" stroke-width="1.1"/><rect x="1" y="4" width="7" height="4.5" fill="#e0e0e0"/></svg>
<svg style="left:569px;top:76px" width="9" height="9"><path d="M8 1.5L1 4.5L8 7.5M8 4.5H2" fill="none" stroke="#d8d8d8" stroke-width="1"/></svg>
<div class="t" style="left:580px;top:75px;font-size:10px;color:#d8d8d8">Persp</div>
<!-- bottom toolbar overlay -->
<div class="a" style="left:2px;top:465px;width:262px;height:19px;background:#1e1e1e;border-radius:3px;border:1px solid #101010"></div>
<div class="a" style="left:6px;top:469px;width:1px;height:11px;background:#5a5a5a"></div>
<div class="a" style="left:8px;top:469px;width:1px;height:11px;background:#5a5a5a"></div>
<div class="a" style="left:14px;top:467px;width:24px;height:15px;background:#505050;border-radius:1px"></div>
<svg style="left:20px;top:468px" width="12" height="13"><circle cx="6" cy="6.5" r="5" fill="none" stroke="#d0d0d0" stroke-width="1.1"/><path d="M8.5 3.5L5 5.5L3.5 9.5L7 7.5Z" fill="none" stroke="#d0d0d0" stroke-width="1"/></svg>
<div class="a" style="left:39px;top:467px;width:24px;height:15px;background:#3d5e87;border-radius:1px"></div>
<svg style="left:45px;top:468px" width="12" height="13"><path d="M6 1.5V11.5M1 6.5H11" stroke="#c8dcf0" stroke-width="1"/><path d="M6 0.5L4.3 2.5H7.7Z M6 12.5L4.3 10.5H7.7Z M0 6.5L2 4.8V8.2Z M12 6.5L10 4.8V8.2Z" fill="#c8dcf0"/></svg>
<div class="a" style="left:64px;top:467px;width:24px;height:15px;background:#505050;border-radius:1px"></div>
<svg style="left:70px;top:468px" width="12" height="13"><rect x="1" y="1.5" width="10" height="10" rx="1" fill="none" stroke="#d0d0d0" stroke-width="1"/><path d="M3 3.5L9 9.5M9 3.5L6 6.5" stroke="#d0d0d0" stroke-width="1.2"/></svg>
<div class="a" style="left:89px;top:467px;width:24px;height:15px;background:#505050;border-radius:1px"></div>
<svg style="left:95px;top:468px" width="12" height="13"><path d="M1 3.5H11M1 6.5H11M1 9.5H11" stroke="#d0d0d0" stroke-width="1"/><rect x="6" y="1.5" width="4" height="3" fill="#d0d0d0"/><rect x="2.5" y="8" width="3" height="3" fill="#d0d0d0"/></svg>
<div class="a" style="left:114px;top:467px;width:24px;height:15px;background:#505050;border-radius:1px"></div>
<svg style="left:120px;top:468px" width="12" height="13"><path d="M3 1V12M6 1V12M9 1V12M0.5 4H11.5M0.5 8H11.5" stroke="#d0d0d0" stroke-width="0.9"/><path d="M11 1L1 12" stroke="#d0d0d0" stroke-width="1.3"/></svg>
<div class="a" style="left:139px;top:467px;width:24px;height:15px;background:#505050;border-radius:1px"></div>
<svg style="left:145px;top:468px" width="12" height="13"><circle cx="6" cy="6.5" r="5.3" fill="#e0e0e0"/><circle cx="5.2" cy="5.6" r="3.9" fill="#505050"/></svg>
<div class="a" style="left:164px;top:467px;width:24px;height:15px;background:#505050;border-radius:1px"></div>
<svg style="left:170px;top:468px" width="12" height="13"><circle cx="4" cy="2.5" r="2" fill="#d0d0d0"/><path d="M6 4.5L11 7.5L6 10.5L1 7.5Z" fill="none" stroke="#d0d0d0" stroke-width="1"/><path d="M4 7.5L6 6.5L8 7.5L6 8.5Z" fill="#d0d0d0"/></svg>
<div class="a" style="left:189px;top:467px;width:24px;height:15px;background:#505050;border-radius:1px"></div>
<svg style="left:195px;top:468px" width="12" height="13"><circle cx="5" cy="5" r="3.5" fill="none" stroke="#d0d0d0" stroke-width="1.2"/><path d="M7.5 7.5L11 11" stroke="#d0d0d0" stroke-width="1.5"/></svg>
<div class="a" style="left:214px;top:467px;width:24px;height:15px;background:#3d5e87;border-radius:1px"></div>
<svg style="left:220px;top:468px" width="12" height="13"><path d="M6 1V12M0.5 6.5H11.5" stroke="#c8dcf0" stroke-width="1"/><circle cx="6" cy="6.5" r="2" fill="#c8dcf0"/><path d="M6 0L4.8 1.8H7.2Z M6 13L4.8 11.2H7.2Z M0 6.5L1.8 5.3V7.7Z M12 6.5L10.2 5.3V7.7Z" fill="#c8dcf0"/></svg>
<div class="a" style="left:239px;top:467px;width:24px;height:15px;background:#505050;border-radius:1px"></div>
<svg style="left:245px;top:468px" width="12" height="13"><rect x="0.5" y="1" width="8" height="6" rx="1" fill="#d0d0d0"/><path d="M8.5 3L11.5 1.5V6.5L8.5 5Z" fill="#d0d0d0"/><path d="M1 10Q6 5.5 11 10Q6 14.5 1 10Z" fill="none" stroke="#d0d0d0" stroke-width="1"/><circle cx="6" cy="10" r="1.2" fill="#d0d0d0"/></svg>
</div>
<!--/SCENE-->
<div class="a" id="insp" style="left:833px;top:82px;width:367px;height:767px;background:#383838"></div>
<!--INSP--><div class="a" style="left:833px;top:82px;width:367px;height:43px;background:#3e3e3e;"></div>
<svg style="left:838px;top:90px" width="16" height="17"><path d="M8 1L14.5 4.5V12.2L8 15.7L1.5 12.2V4.5Z M1.5 4.5L8 8L14.5 4.5 M8 8V15.7" fill="none" stroke="#c8c8c8" stroke-width="1.1"/></svg>
<div class="a" style="left:853.5px;top:106.0px;border-left:3.5px solid transparent;border-right:3.5px solid transparent;border-top:4px solid #d0d0d0"></div>
<div class="a" style="left:866px;top:90.0px;width:11px;height:11px;background:#2a2a2a;border:1px solid #1f1f1f;border-radius:2px"></div>
<svg style="left:868px;top:92.0px" width="8" height="7"><path d="M0.8 3.5L3 5.8L7.2 1" fill="none" stroke="#e8e8e8" stroke-width="1.3"/></svg>
<div class="a" style="left:882px;top:89px;width:260px;height:13px;background:#2a2a2a;border:1px solid #202020;border-radius:2px"></div>
<div class="t" style="left:885px;top:89.8px;color:#e0e0e0;font-size:9.7px;font-weight:bold;">Plane</div>
<div class="a" style="left:1145px;top:90.0px;width:11px;height:11px;background:#2a2a2a;border:1px solid #1f1f1f;border-radius:2px"></div>
<div class="t" style="left:1159px;top:89.8px;color:#c4c4c4;font-size:9.7px;">Static</div>
<div class="a" style="left:1191px;top:94.0px;border-left:3.5px solid transparent;border-right:3.5px solid transparent;border-top:4px solid #c4c4c4"></div>
<div class="t" style="left:863px;top:107.8px;color:#a8a8a8;font-size:9.7px;">Tag</div>
<div class="a" style="left:882px;top:107.5px;width:144px;height:12px;background:#515151;border-radius:2px;border-bottom:1px solid #2a2a2a;"></div>
<div class="t" style="left:885px;top:107.8px;color:#d0d0d0;font-size:9.7px;">Untagged</div>
<div class="a" style="left:1016px;top:112.0px;border-left:3.5px solid transparent;border-right:3.5px solid transparent;border-top:4px solid #c4c4c4"></div>
<div class="t" style="left:1036px;top:107.8px;color:#a8a8a8;font-size:9.7px;">Layer</div>
<div class="a" style="left:1064px;top:107.5px;width:135px;height:12px;background:#515151;border-radius:2px;border-bottom:1px solid #2a2a2a;"></div>
<div class="t" style="left:1067px;top:107.8px;color:#d0d0d0;font-size:9.7px;">Default</div>
<div class="a" style="left:1189px;top:112.0px;border-left:3.5px solid transparent;border-right:3.5px solid transparent;border-top:4px solid #c4c4c4"></div>
<div class="a" style="left:833px;top:125px;width:367px;height:1px;background:#242424;"></div>
<div class="a" style="left:833px;top:126px;width:367px;height:17px;background:#3e3e3e;"></div>
<div class="a" style="left:837.5px;top:132.0px;border-left:3.5px solid transparent;border-right:3.5px solid transparent;border-top:5px solid #7a7a7a"></div>
<svg style="left:849px;top:129.5px" width="11" height="10"><path d="M5.5 1V5" stroke="#9be06a" stroke-width="2" stroke-linecap="round"/><path d="M5.5 5.5L1.5 8" stroke="#5cc8f0" stroke-width="2" stroke-linecap="round"/><path d="M5.5 5.5L9.5 8" stroke="#f07a50" stroke-width="2" stroke-linecap="round"/></svg>
<div class="t" style="left:878px;top:128.8px;color:#d4d4d4;font-size:9.7px;font-weight:bold;">Transform</div>
<svg style="left:1159px;top:130.0px" width="9" height="9"><circle cx="4.5" cy="4.5" r="4.3" fill="#c8c8c8"/><path d="M3 3.5Q3 1.8 4.6 1.8Q6.2 1.8 6.2 3.2Q6.2 4.2 4.7 4.8V5.6" fill="none" stroke="#3e3e3e" stroke-width="1.2"/><circle cx="4.7" cy="7.2" r="0.7" fill="#3e3e3e"/></svg>
<svg style="left:1174px;top:130.0px" width="9" height="9"><path d="M0 2.5H9M0 6.5H9" stroke="#c8c8c8" stroke-width="1"/><rect x="5" y="0.5" width="1.6" height="4" fill="#c8c8c8"/><rect x="2.5" y="4.5" width="1.6" height="4" fill="#c8c8c8"/></svg>
<div class="a" style="left:1192px;top:130.5px;width:2px;height:2px;background:#c8c8c8;"></div>
<div class="a" style="left:1192px;top:134.0px;width:2px;height:2px;background:#c8c8c8;"></div>
<div class="a" style="left:1192px;top:137.5px;width:2px;height:2px;background:#c8c8c8;"></div>
<div class="t" style="left:847px;top:146.8px;color:#c4c4c4;font-size:9.7px;">Position</div>
<div class="t" style="left:985px;top:146.8px;color:#c4c4c4;font-size:9.7px;">X</div>
<div class="a" style="left:996px;top:146.0px;width:57px;height:13px;background:#2a2a2a;border:1px solid #222;border-radius:2px"></div>
<div class="t" style="left:999px;top:146.8px;color:#d0d0d0;font-size:9.7px;">7.43032</div>
<div class="t" style="left:1059px;top:146.8px;color:#c4c4c4;font-size:9.7px;">Y</div>
<div class="a" style="left:1069px;top:146.0px;width:57px;height:13px;background:#2a2a2a;border:1px solid #222;border-radius:2px"></div>
<div class="t" style="left:1072px;top:146.8px;color:#d0d0d0;font-size:9.7px;">-1.93119</div>
<div class="t" style="left:1132px;top:146.8px;color:#c4c4c4;font-size:9.7px;">Z</div>
<div class="a" style="left:1142px;top:146.0px;width:58px;height:13px;background:#2a2a2a;border:1px solid #222;border-radius:2px"></div>
<div class="t" style="left:1145px;top:146.8px;color:#d0d0d0;font-size:9.7px;">-6.10581</div>
<div class="t" style="left:847px;top:161.8px;color:#c4c4c4;font-size:9.7px;">Rotation</div>
<div class="t" style="left:985px;top:161.8px;color:#c4c4c4;font-size:9.7px;">X</div>
<div class="a" style="left:996px;top:161.0px;width:57px;height:13px;background:#2a2a2a;border:1px solid #222;border-radius:2px"></div>
<div class="t" style="left:999px;top:161.8px;color:#d0d0d0;font-size:9.7px;">0</div>
<div class="t" style="left:1059px;top:161.8px;color:#c4c4c4;font-size:9.7px;">Y</div>
<div class="a" style="left:1069px;top:161.0px;width:57px;height:13px;background:#2a2a2a;border:1px solid #222;border-radius:2px"></div>
<div class="t" style="left:1072px;top:161.8px;color:#d0d0d0;font-size:9.7px;">0</div>
<div class="t" style="left:1132px;top:161.8px;color:#c4c4c4;font-size:9.7px;">Z</div>
<div class="a" style="left:1142px;top:161.0px;width:58px;height:13px;background:#2a2a2a;border:1px solid #222;border-radius:2px"></div>
<div class="t" style="left:1145px;top:161.8px;color:#d0d0d0;font-size:9.7px;">0</div>
<div class="t" style="left:847px;top:176.8px;color:#c4c4c4;font-size:9.7px;">Scale</div>
<div class="t" style="left:985px;top:176.8px;color:#c4c4c4;font-size:9.7px;">X</div>
<div class="a" style="left:996px;top:176.0px;width:57px;height:13px;background:#2a2a2a;border:1px solid #222;border-radius:2px"></div>
<div class="t" style="left:999px;top:176.8px;color:#d0d0d0;font-size:9.7px;">1</div>
<div class="t" style="left:1059px;top:176.8px;color:#c4c4c4;font-size:9.7px;">Y</div>
<div class="a" style="left:1069px;top:176.0px;width:57px;height:13px;background:#2a2a2a;border:1px solid #222;border-radius:2px"></div>
<div class="t" style="left:1072px;top:176.8px;color:#d0d0d0;font-size:9.7px;">1</div>
<div class="t" style="left:1132px;top:176.8px;color:#c4c4c4;font-size:9.7px;">Z</div>
<div class="a" style="left:1142px;top:176.0px;width:58px;height:13px;background:#2a2a2a;border:1px solid #222;border-radius:2px"></div>
<div class="t" style="left:1145px;top:176.8px;color:#d0d0d0;font-size:9.7px;">1</div>
<svg style="left:968px;top:178px" width="11" height="9"><path d="M4 1.5H2.5Q0.8 1.5 0.8 4.5Q0.8 7.5 2.5 7.5H4M7 1.5H8.5Q10.2 1.5 10.2 4.5Q10.2 7.5 8.5 7.5H7M1 0.5L10 8.5" fill="none" stroke="#c4c4c4" stroke-width="1.1"/></svg>
<div class="a" style="left:833px;top:196px;width:367px;height:1px;background:#242424;"></div>
<div class="a" style="left:833px;top:197px;width:367px;height:17px;background:#3e3e3e;"></div>
<div class="a" style="left:837.5px;top:203.0px;border-left:3.5px solid transparent;border-right:3.5px solid transparent;border-top:5px solid #7a7a7a"></div>
<svg style="left:849px;top:200.5px" width="11" height="11"><rect x="0.5" y="0.5" width="10" height="10" rx="1" fill="#2a4f60" stroke="#7cc0d8" stroke-width="1"/><path d="M3.8 0.5V10.5M7.2 0.5V10.5M0.5 3.8H10.5M0.5 7.2H10.5" stroke="#7cc0d8" stroke-width="0.9"/></svg>
<div class="t" style="left:878px;top:199.8px;color:#d4d4d4;font-size:9.7px;font-weight:bold;">Plane (Mesh Filter)</div>
<svg style="left:1159px;top:201.0px" width="9" height="9"><circle cx="4.5" cy="4.5" r="4.3" fill="#c8c8c8"/><path d="M3 3.5Q3 1.8 4.6 1.8Q6.2 1.8 6.2 3.2Q6.2 4.2 4.7 4.8V5.6" fill="none" stroke="#3e3e3e" stroke-width="1.2"/><circle cx="4.7" cy="7.2" r="0.7" fill="#3e3e3e"/></svg>
<svg style="left:1174px;top:201.0px" width="9" height="9"><path d="M0 2.5H9M0 6.5H9" stroke="#c8c8c8" stroke-width="1"/><rect x="5" y="0.5" width="1.6" height="4" fill="#c8c8c8"/><rect x="2.5" y="4.5" width="1.6" height="4" fill="#c8c8c8"/></svg>
<div class="a" style="left:1192px;top:201.5px;width:2px;height:2px;background:#c8c8c8;"></div>
<div class="a" style="left:1192px;top:205.0px;width:2px;height:2px;background:#c8c8c8;"></div>
<div class="a" style="left:1192px;top:208.5px;width:2px;height:2px;background:#c8c8c8;"></div>
<div class="t" style="left:847px;top:216.8px;color:#c4c4c4;font-size:9.7px;">Mesh</div>
<div class="a" style="left:984px;top:216.0px;width:216px;height:13px;background:#2a2a2a;border:1px solid #222;border-radius:2px"></div>
<svg style="left:987px;top:218.0px" width="9" height="9"><rect x="0.5" y="0.5" width="8" height="8" fill="#2f5a6a" stroke="#6fb0c8" stroke-width="0.8"/><path d="M3.2 0.5V8.5M5.8 0.5V8.5M0.5 3.2H8.5M0.5 5.8H8.5" stroke="#6fb0c8" stroke-width="0.7"/></svg>
<div class="t" style="left:998px;top:216.8px;color:#c4c4c4;font-size:9.7px;">Plane</div>
<div class="a" style="left:1184px;top:216.0px;width:1px;height:13px;background:#222"></div>
<svg style="left:1188px;top:218.0px" width="9" height="9"><circle cx="4.5" cy="4.5" r="3.8" fill="none" stroke="#c4c4c4" stroke-width="1"/><circle cx="4.5" cy="4.5" r="1.5" fill="#c4c4c4"/></svg>
<div class="a" style="left:833px;top:234px;width:367px;height:1px;background:#242424;"></div>
<div class="a" style="left:833px;top:235px;width:367px;height:17px;background:#3e3e3e;"></div>
<div class="a" style="left:837.5px;top:241.0px;border-left:3.5px solid transparent;border-right:3.5px solid transparent;border-top:5px solid #7a7a7a"></div>
<svg style="left:848px;top:238.5px" width="12" height="12"><rect x="0.5" y="0.5" width="9" height="9" rx="1" fill="#2a4f60" stroke="#7cc0d8" stroke-width="1"/><path d="M3.5 0.5V9.5M6.5 0.5V9.5M0.5 3.5H9.5M0.5 6.5H9.5" stroke="#7cc0d8" stroke-width="0.9"/><ellipse cx="8" cy="9" rx="3.5" ry="2.3" fill="#3e3e3e" stroke="#d8d8d8" stroke-width="0.9"/><circle cx="8" cy="9" r="1" fill="#d8d8d8"/></svg>
<div class="a" style="left:863px;top:238.0px;width:11px;height:11px;background:#2a2a2a;border:1px solid #1f1f1f;border-radius:2px"></div>
<svg style="left:865px;top:240.0px" width="8" height="7"><path d="M0.8 3.5L3 5.8L7.2 1" fill="none" stroke="#e8e8e8" stroke-width="1.3"/></svg>
<div class="t" style="left:878px;top:237.8px;color:#d4d4d4;font-size:9.7px;font-weight:bold;">Mesh Renderer</div>
<svg style="left:1159px;top:239.0px" width="9" height="9"><circle cx="4.5" cy="4.5" r="4.3" fill="#c8c8c8"/><path d="M3 3.5Q3 1.8 4.6 1.8Q6.2 1.8 6.2 3.2Q6.2 4.2 4.7 4.8V5.6" fill="none" stroke="#3e3e3e" stroke-width="1.2"/><circle cx="4.7" cy="7.2" r="0.7" fill="#3e3e3e"/></svg>
<svg style="left:1174px;top:239.0px" width="9" height="9"><path d="M0 2.5H9M0 6.5H9" stroke="#c8c8c8" stroke-width="1"/><rect x="5" y="0.5" width="1.6" height="4" fill="#c8c8c8"/><rect x="2.5" y="4.5" width="1.6" height="4" fill="#c8c8c8"/></svg>
<div class="a" style="left:1192px;top:239.5px;width:2px;height:2px;background:#c8c8c8;"></div>
<div class="a" style="left:1192px;top:243.0px;width:2px;height:2px;background:#c8c8c8;"></div>
<div class="a" style="left:1192px;top:246.5px;width:2px;height:2px;background:#c8c8c8;"></div>
<div class="a" style="left:840px;top:258.0px;border-top:3.5px solid transparent;border-bottom:3.5px solid transparent;border-left:5px solid #7a7a7a"></div>
<div class="t" style="left:848px;top:255.8px;color:#c4c4c4;font-size:9.7px;font-weight:bold;">Materials</div>
<div class="a" style="left:1164px;top:255px;width:36px;height:13px;background:#2a2a2a;border:1px solid #222;border-radius:2px"></div>
<div class="t" style="left:1167px;top:255.8px;color:#d0d0d0;font-size:9.7px;">1</div>
<div class="a" style="left:837.5px;top:274.0px;border-left:3.5px solid transparent;border-right:3.5px solid transparent;border-top:5px solid #7a7a7a"></div>
<div class="t" style="left:848px;top:270.8px;color:#c4c4c4;font-size:9.7px;font-weight:bold;">Lighting</div>
<div class="t" style="left:858px;top:285.8px;color:#c4c4c4;font-size:9.7px;">Cast Shadows</div>
<div class="a" style="left:984px;top:285.5px;width:215px;height:12px;background:#515151;border-radius:2px;border-bottom:1px solid #2a2a2a;"></div>
<div class="t" style="left:987px;top:285.8px;color:#d0d0d0;font-size:9.7px;">On</div>
<div class="a" style="left:1189px;top:290.0px;border-left:3.5px solid transparent;border-right:3.5px solid transparent;border-top:4px solid #c4c4c4"></div>
<div class="t" style="left:858px;top:300.8px;color:#c4c4c4;font-size:9.7px;">Static Shadow Caster</div>
<div class="a" style="left:984px;top:301.0px;width:11px;height:11px;background:#2a2a2a;border:1px solid #1f1f1f;border-radius:2px"></div>
<div class="t" style="left:858px;top:315.8px;color:#c4c4c4;font-size:9.7px;">Contribute Global Illumination</div>
<div class="a" style="left:984px;top:316.0px;width:11px;height:11px;background:#2a2a2a;border:1px solid #1f1f1f;border-radius:2px"></div>
<div class="t" style="left:870px;top:330.8px;color:#7a7a7a;font-size:9.7px;">Receive Global Illumination</div>
<div class="a" style="left:984px;top:330.5px;width:215px;height:12px;background:#434343;border-radius:2px;"></div>
<div class="t" style="left:987px;top:330.8px;color:#7e7e7e;font-size:9.7px;">Light Probes</div>
<div class="a" style="left:1189px;top:335.0px;border-left:3.5px solid transparent;border-right:3.5px solid transparent;border-top:4px solid #6a6a6a"></div>
<div class="a" style="left:837.5px;top:349.0px;border-left:3.5px solid transparent;border-right:3.5px solid transparent;border-top:5px solid #7a7a7a"></div>
<div class="t" style="left:848px;top:345.8px;color:#c4c4c4;font-size:9.7px;font-weight:bold;">Probes</div>
<div class="t" style="left:858px;top:360.8px;color:#c4c4c4;font-size:9.7px;">Light Probes</div>
<div class="a" style="left:984px;top:360.5px;width:215px;height:12px;background:#515151;border-radius:2px;border-bottom:1px solid #2a2a2a;"></div>
<div class="t" style="left:987px;top:360.8px;color:#d0d0d0;font-size:9.7px;">Blend Probes</div>
<div class="a" style="left:1189px;top:365.0px;border-left:3.5px solid transparent;border-right:3.5px solid transparent;border-top:4px solid #c4c4c4"></div>
<div class="t" style="left:858px;top:375.8px;color:#c4c4c4;font-size:9.7px;">Anchor Override</div>
<div class="a" style="left:984px;top:375.0px;width:216px;height:13px;background:#2a2a2a;border:1px solid #222;border-radius:2px"></div>
<div class="t" style="left:987px;top:375.8px;color:#a8a8a8;font-size:9.7px;">None (Transform)</div>
<div class="a" style="left:1184px;top:375.0px;width:1px;height:13px;background:#222"></div>
<svg style="left:1188px;top:377.0px" width="9" height="9"><circle cx="4.5" cy="4.5" r="3.8" fill="none" stroke="#c4c4c4" stroke-width="1"/><circle cx="4.5" cy="4.5" r="1.5" fill="#c4c4c4"/></svg>
<div class="a" style="left:837.5px;top:394.0px;border-left:3.5px solid transparent;border-right:3.5px solid transparent;border-top:5px solid #7a7a7a"></div>
<div class="t" style="left:848px;top:390.8px;color:#c4c4c4;font-size:9.7px;font-weight:bold;">Ray Tracing</div>
<div class="t" style="left:858px;top:405.8px;color:#c4c4c4;font-size:9.7px;">Ray Tracing Mode</div>
<div class="a" style="left:984px;top:405.5px;width:215px;height:12px;background:#515151;border-radius:2px;border-bottom:1px solid #2a2a2a;"></div>
<div class="t" style="left:987px;top:405.8px;color:#d0d0d0;font-size:9.7px;">Dynamic Transform</div>
<div class="a" style="left:1189px;top:410.0px;border-left:3.5px solid transparent;border-right:3.5px solid transparent;border-top:4px solid #c4c4c4"></div>
<div class="t" style="left:858px;top:420.8px;color:#c4c4c4;font-size:9.7px;">Procedural Geometry</div>
<div class="a" style="left:984px;top:421.0px;width:11px;height:11px;background:#2a2a2a;border:1px solid #1f1f1f;border-radius:2px"></div>
<div class="t" style="left:858px;top:435.8px;color:#c4c4c4;font-size:9.7px;">Acceleration Structure Build F</div>
<div class="a" style="left:984px;top:436.0px;width:11px;height:11px;background:#2a2a2a;border:1px solid #1f1f1f;border-radius:2px"></div>
<div class="a" style="left:1001px;top:435.5px;width:198px;height:12px;background:#434343;border-radius:2px;"></div>
<div class="t" style="left:1004px;top:435.8px;color:#7e7e7e;font-size:9.7px;">Prefer Fast Trace</div>
<div class="a" style="left:1189px;top:440.0px;border-left:3.5px solid transparent;border-right:3.5px solid transparent;border-top:4px solid #6a6a6a"></div>
<div class="a" style="left:837.5px;top:454.0px;border-left:3.5px solid transparent;border-right:3.5px solid transparent;border-top:5px solid #7a7a7a"></div>
<div class="t" style="left:848px;top:450.8px;color:#c4c4c4;font-size:9.7px;font-weight:bold;">Additional Settings</div>
<div class="t" style="left:858px;top:465.8px;color:#c4c4c4;font-size:9.7px;">Motion Vectors</div>
<div class="a" style="left:984px;top:465.5px;width:215px;height:12px;background:#515151;border-radius:2px;border-bottom:1px solid #2a2a2a;"></div>
<div class="t" style="left:987px;top:465.8px;color:#d0d0d0;font-size:9.7px;">Per Object Motion</div>
<div class="a" style="left:1189px;top:470.0px;border-left:3.5px solid transparent;border-right:3.5px solid transparent;border-top:4px solid #c4c4c4"></div>
<div class="t" style="left:858px;top:480.8px;color:#c4c4c4;font-size:9.7px;">Dynamic Occlusion</div>
<div class="a" style="left:984px;top:481.0px;width:11px;height:11px;background:#2a2a2a;border:1px solid #1f1f1f;border-radius:2px"></div>
<svg style="left:986px;top:483.0px" width="8" height="7"><path d="M0.8 3.5L3 5.8L7.2 1" fill="none" stroke="#e8e8e8" stroke-width="1.3"/></svg>
<div class="t" style="left:858px;top:495.8px;color:#c4c4c4;font-size:9.7px;">Rendering Layer Mask</div>
<div class="a" style="left:984px;top:495.5px;width:215px;height:12px;background:#515151;border-radius:2px;border-bottom:1px solid #2a2a2a;"></div>
<div class="t" style="left:987px;top:495.8px;color:#d0d0d0;font-size:9.7px;">Default</div>
<div class="a" style="left:1189px;top:500.0px;border-left:3.5px solid transparent;border-right:3.5px solid transparent;border-top:4px solid #c4c4c4"></div>
<div class="a" style="left:833px;top:515px;width:367px;height:1px;background:#242424;"></div>
<div class="a" style="left:833px;top:516px;width:367px;height:17px;background:#3e3e3e;"></div>
<div class="a" style="left:837.5px;top:522.0px;border-left:3.5px solid transparent;border-right:3.5px solid transparent;border-top:5px solid #7a7a7a"></div>
<svg style="left:849px;top:519.5px" width="11" height="11"><rect x="0.5" y="0.5" width="10" height="10" rx="1" fill="#3f5a2a" stroke="#9ee070" stroke-width="1"/><path d="M3.8 0.5V10.5M7.2 0.5V10.5M0.5 3.8H10.5M0.5 7.2H10.5" stroke="#9ee070" stroke-width="0.9"/></svg>
<div class="a" style="left:863px;top:519.0px;width:11px;height:11px;background:#2a2a2a;border:1px solid #1f1f1f;border-radius:2px"></div>
<svg style="left:865px;top:521.0px" width="8" height="7"><path d="M0.8 3.5L3 5.8L7.2 1" fill="none" stroke="#e8e8e8" stroke-width="1.3"/></svg>
<div class="t" style="left:878px;top:518.8px;color:#d4d4d4;font-size:9.7px;font-weight:bold;">Mesh Collider</div>
<svg style="left:1159px;top:520.0px" width="9" height="9"><circle cx="4.5" cy="4.5" r="4.3" fill="#c8c8c8"/><path d="M3 3.5Q3 1.8 4.6 1.8Q6.2 1.8 6.2 3.2Q6.2 4.2 4.7 4.8V5.6" fill="none" stroke="#3e3e3e" stroke-width="1.2"/><circle cx="4.7" cy="7.2" r="0.7" fill="#3e3e3e"/></svg>
<svg style="left:1174px;top:520.0px" width="9" height="9"><path d="M0 2.5H9M0 6.5H9" stroke="#c8c8c8" stroke-width="1"/><rect x="5" y="0.5" width="1.6" height="4" fill="#c8c8c8"/><rect x="2.5" y="4.5" width="1.6" height="4" fill="#c8c8c8"/></svg>
<div class="a" style="left:1192px;top:520.5px;width:2px;height:2px;background:#c8c8c8;"></div>
<div class="a" style="left:1192px;top:524.0px;width:2px;height:2px;background:#c8c8c8;"></div>
<div class="a" style="left:1192px;top:527.5px;width:2px;height:2px;background:#c8c8c8;"></div>
<div class="t" style="left:847px;top:536.8px;color:#c4c4c4;font-size:9.7px;">Convex</div>
<div class="a" style="left:984px;top:537.0px;width:11px;height:11px;background:#2a2a2a;border:1px solid #1f1f1f;border-radius:2px"></div>
<div class="t" style="left:858px;top:551.8px;color:#6e6e6e;font-size:9.7px;">Is Trigger</div>
<div class="a" style="left:984px;top:552.0px;width:11px;height:11px;background:#2e2e2e;border:1px solid #2a2a2a;border-radius:2px"></div>
<div class="t" style="left:847px;top:566.8px;color:#c4c4c4;font-size:9.7px;">Provides Contacts</div>
<div class="a" style="left:984px;top:567.0px;width:11px;height:11px;background:#2a2a2a;border:1px solid #1f1f1f;border-radius:2px"></div>
<div class="t" style="left:847px;top:581.8px;color:#c4c4c4;font-size:9.7px;">Cooking Options</div>
<div class="a" style="left:984px;top:581.5px;width:215px;height:12px;background:#515151;border-radius:2px;border-bottom:1px solid #2a2a2a;"></div>
<div class="t" style="left:987px;top:581.8px;color:#d0d0d0;font-size:9.7px;">Everything</div>
<div class="a" style="left:1189px;top:586.0px;border-left:3.5px solid transparent;border-right:3.5px solid transparent;border-top:4px solid #c4c4c4"></div>
<div class="t" style="left:847px;top:596.8px;color:#c4c4c4;font-size:9.7px;">Material</div>
<div class="a" style="left:984px;top:596.0px;width:216px;height:13px;background:#2a2a2a;border:1px solid #222;border-radius:2px"></div>
<div class="t" style="left:987px;top:596.8px;color:#a8a8a8;font-size:9.7px;">None (Physics Material)</div>
<div class="a" style="left:1184px;top:596.0px;width:1px;height:13px;background:#222"></div>
<svg style="left:1188px;top:598.0px" width="9" height="9"><circle cx="4.5" cy="4.5" r="3.8" fill="none" stroke="#c4c4c4" stroke-width="1"/><circle cx="4.5" cy="4.5" r="1.5" fill="#c4c4c4"/></svg>
<div class="t" style="left:847px;top:611.8px;color:#c4c4c4;font-size:9.7px;">Mesh</div>
<div class="a" style="left:984px;top:611.0px;width:216px;height:13px;background:#2a2a2a;border:1px solid #222;border-radius:2px"></div>
<svg style="left:987px;top:613.0px" width="9" height="9"><rect x="0.5" y="0.5" width="8" height="8" fill="#2f5a6a" stroke="#6fb0c8" stroke-width="0.8"/><path d="M3.2 0.5V8.5M5.8 0.5V8.5M0.5 3.2H8.5M0.5 5.8H8.5" stroke="#6fb0c8" stroke-width="0.7"/></svg>
<div class="t" style="left:998px;top:611.8px;color:#c4c4c4;font-size:9.7px;">Plane</div>
<div class="a" style="left:1184px;top:611.0px;width:1px;height:13px;background:#222"></div>
<svg style="left:1188px;top:613.0px" width="9" height="9"><circle cx="4.5" cy="4.5" r="3.8" fill="none" stroke="#c4c4c4" stroke-width="1"/><circle cx="4.5" cy="4.5" r="1.5" fill="#c4c4c4"/></svg>
<div class="a" style="left:840px;top:629.0px;border-top:3.5px solid transparent;border-bottom:3.5px solid transparent;border-left:5px solid #7a7a7a"></div>
<div class="t" style="left:847px;top:626.8px;color:#c4c4c4;font-size:9.7px;">Layer Overrides</div>
<div class="a" style="left:833px;top:644px;width:367px;height:1px;background:#242424;"></div>
<div class="a" style="left:833px;top:645px;width:367px;height:41px;background:#3a3a3a;"></div>
<svg style="left:845px;top:649px" width="24" height="24"><rect x="0" y="0" width="24" height="24" fill="#4a4a4a"/><defs><radialGradient id="sph" cx="0.35" cy="0.3" r="0.75"><stop offset="0" stop-color="#8a8a8a"/><stop offset="0.6" stop-color="#4a4a4a"/><stop offset="1" stop-color="#2a2a2a"/></radialGradient></defs><circle cx="12" cy="12" r="10.5" fill="url(#sph)"/></svg>
<div class="t" style="left:875px;top:648.8px;color:#7e7e7e;font-size:10px;">Lit (Material)</div>
<svg style="left:1160px;top:650px" width="9" height="9"><circle cx="4.5" cy="4.5" r="4.3" fill="#bdbdbd"/><path d="M3 3.5Q3 1.8 4.6 1.8Q6.2 1.8 6.2 3.2Q6.2 4.2 4.7 4.8V5.6" fill="none" stroke="#3a3a3a" stroke-width="1.2"/><circle cx="4.7" cy="7.2" r="0.7" fill="#3a3a3a"/></svg>
<svg style="left:1174px;top:650px" width="9" height="9"><path d="M0 2.5H9M0 6.5H9" stroke="#8a8a8a" stroke-width="1"/><rect x="5" y="0.5" width="1.6" height="4" fill="#8a8a8a"/><rect x="2.5" y="4.5" width="1.6" height="4" fill="#8a8a8a"/></svg>
<div class="a" style="left:1192px;top:650.5px;width:2px;height:2px;background:#c8c8c8;"></div>
<div class="a" style="left:1192px;top:654.0px;width:2px;height:2px;background:#c8c8c8;"></div>
<div class="a" style="left:1192px;top:657.5px;width:2px;height:2px;background:#c8c8c8;"></div>
<div class="a" style="left:840px;top:673.5px;border-top:3.5px solid transparent;border-bottom:3.5px solid transparent;border-left:5px solid #6a6a6a"></div>
<div class="t" style="left:873px;top:666.8px;color:#6e6e6e;font-size:9.7px;">Shader</div>
<div class="a" style="left:912px;top:666.5px;width:214px;height:12px;background:#434343;border-radius:2px"></div>
<div class="t" style="left:915px;top:666.8px;color:#7e7e7e;font-size:9.7px;">Universal Render Pipeline/Lit</div>
<div class="a" style="left:1115px;top:671.0px;border-left:3.5px solid transparent;border-right:3.5px solid transparent;border-top:4px solid #7a7a7a"></div>
<div class="a" style="left:1131px;top:666px;width:33px;height:13px;background:#434343;border-radius:2px"></div>
<div class="t" style="left:1134px;top:666.8px;color:#8a8a8a;font-size:9.7px;">Edit...</div>
<div class="a" style="left:1167px;top:666px;width:33px;height:13px;background:#434343;border-radius:2px"></div>
<svg style="left:1172px;top:669px" width="8" height="7"><path d="M0 1H8M1.5 3.5H8M3 6H8" stroke="#8a8a8a" stroke-width="1"/></svg>
<div class="a" style="left:1189px;top:671.0px;border-left:3.5px solid transparent;border-right:3.5px solid transparent;border-top:4px solid #8a8a8a"></div>
<div class="a" style="left:833px;top:693px;width:367px;height:1px;background:#242424;"></div>
<div class="a" style="left:932px;top:701px;width:171px;height:16px;background:#585858;border-radius:3px;border-bottom:1px solid #262626"></div>
<div class="t" style="left:932px;top:702.5px;width:171px;text-align:center;color:#e0e0e0;font-size:9.7px">Add Component</div>
<div class="a" style="left:831px;top:63px;width:2px;height:786px;background:#191919;"></div><!--/INSP-->
<div class="a" style="left:0;top:568px;width:832px;height:19px;background:#191919"></div>
<div class="a" id="proj" style="left:0;top:587px;width:832px;height:262px;background:#383838"></div>
<div class="a" style="left:0;top:849px;width:1200px;height:14px;background:#191919"></div>
<!--PROJ--><div class="a" style="left:0px;top:569px;width:59px;height:18px;background:#3c3c3c;border-radius:3px 3px 0 0"></div>
<svg style="left:5px;top:574.5px" width="10" height="8"><path d="M0 0.5H3.8L4.8 1.5H9.5V7.5H0Z" fill="#c4c4c4"/></svg>
<div class="t" style="left:17px;top:572.8px;color:#c4c4c4;font-size:10px;">Project</div>
<svg style="left:67px;top:574px" width="9" height="9"><rect x="0.5" y="0.5" width="8" height="8" rx="1" fill="#c4c4c4"/><path d="M2 3H5M2 5H4M5.5 5.5L7 7" stroke="#191919" stroke-width="1"/></svg>
<div class="t" style="left:79px;top:572.8px;color:#c4c4c4;font-size:10px;">Console</div>
<svg style="left:805px;top:574px" width="7" height="9"><path d="M1.5 4V2.5Q3.5 0 5.5 2.5" fill="none" stroke="#c4c4c4" stroke-width="1.1"/><rect x="0.5" y="4" width="6" height="4.5" fill="none" stroke="#c4c4c4" stroke-width="1"/></svg>
<div class="a" style="left:821px;top:574.0px;width:2px;height:2px;background:#c4c4c4;"></div>
<div class="a" style="left:821px;top:577.5px;width:2px;height:2px;background:#c4c4c4;"></div>
<div class="a" style="left:821px;top:581.0px;width:2px;height:2px;background:#c4c4c4;"></div>
<div class="a" style="left:0px;top:587px;width:832px;height:15px;background:#3c3c3c;"></div>
<div class="a" style="left:0px;top:601px;width:832px;height:1px;background:#2c2c2c;"></div>
<div class="a" style="left:4px;top:593.5px;width:9px;height:2px;background:#d8d8d8;"></div>
<div class="a" style="left:7.5px;top:590px;width:2px;height:9px;background:#d8d8d8;"></div>
<div class="a" style="left:16px;top:593.5px;border-left:3.5px solid transparent;border-right:3.5px solid transparent;border-top:4px solid #c4c4c4"></div>
<div class="a" style="left:482px;top:589.5px;width:240px;height:11px;background:#2a2a2a;border-radius:3px"></div>
<svg style="left:485px;top:591.5px" width="8" height="7"><circle cx="2.8" cy="2.8" r="1.9" fill="none" stroke="#c4c4c4" stroke-width="1.1"/><path d="M4.2 4.2L6.5 6.5" stroke="#c4c4c4" stroke-width="1.2"/></svg>
<svg style="left:709px;top:589px" width="11" height="11"><rect x="3.5" y="1" width="6.5" height="6.5" fill="none" stroke="#c4c4c4" stroke-width="1"/><rect x="0.5" y="6.5" width="3.5" height="3.5" fill="none" stroke="#c4c4c4" stroke-width="1"/><path d="M5 6L8.3 2.7M6 2.7H8.3V5" fill="none" stroke="#c4c4c4" stroke-width="0.9"/></svg>
<div class="a" style="left:723px;top:588px;width:1px;height:13px;background:#2e2e2e;"></div>
<div class="a" style="left:742px;top:588px;width:1px;height:13px;background:#2e2e2e;"></div>
<div class="a" style="left:763px;top:588px;width:1px;height:13px;background:#2e2e2e;"></div>
<div class="a" style="left:782px;top:588px;width:1px;height:13px;background:#2e2e2e;"></div>
<div class="a" style="left:801px;top:588px;width:1px;height:13px;background:#2e2e2e;"></div>
<svg style="left:727px;top:589px" width="11" height="11"><rect x="1" y="0.5" width="4" height="3.5" fill="#c4c4c4"/><circle cx="3" cy="7.5" r="2.8" fill="#c4c4c4"/><path d="M7.5 4L10.5 9H4.5Z" fill="#c4c4c4"/></svg>
<svg style="left:746px;top:590px" width="10" height="10"><path d="M5 0.5H9.5V5L4.5 10L0 5.5Z" fill="#c4c4c4"/><circle cx="7.3" cy="2.7" r="0.9" fill="#3c3c3c"/></svg>
<svg style="left:766px;top:589.5px" width="11" height="11"><circle cx="5.5" cy="5.5" r="5" fill="#d8d8d8"/><rect x="4.7" y="2" width="1.6" height="4.5" fill="#3c3c3c"/><circle cx="5.5" cy="8.3" r="0.9" fill="#3c3c3c"/></svg>
<svg style="left:786px;top:590px" width="10" height="10"><path d="M5 0.5L6.3 3.7L9.7 3.8L7 5.9L8 9.3L5 7.4L2 9.3L3 5.9L0.3 3.8L3.7 3.7Z" fill="#8a8a8a"/></svg>
<svg style="left:805px;top:591px" width="11" height="8"><path d="M0.5 4Q5.5 -1 10.5 4Q5.5 9 0.5 4Z" fill="none" stroke="#7a7a7a" stroke-width="1"/><circle cx="5.5" cy="4" r="1.6" fill="#7a7a7a"/></svg>
<div class="t" style="left:817px;top:589.3px;color:#c4c4c4;font-size:10px;">21</div>
<div class="a" style="left:0px;top:602px;width:140px;height:247px;background:#383838;"></div>
<div class="a" style="left:140px;top:602px;width:8px;height:247px;background:#3a3a3a;"></div>
<div class="a" style="left:141px;top:615px;width:6px;height:146px;background:#5c5c5c;border-radius:3px"></div>
<div class="a" style="left:141px;top:607px;border-left:3px solid transparent;border-right:3px solid transparent;border-bottom:4px solid #c4c4c4"></div>
<div class="a" style="left:141px;top:841px;border-left:3px solid transparent;border-right:3px solid transparent;border-top:4px solid #c4c4c4"></div>
<div class="a" style="left:148px;top:602px;width:1px;height:247px;background:#242424;"></div>
<div class="a" style="left:0px;top:686.5px;width:139px;height:12px;background:#464646;"></div>
<div class="a" style="left:2px;top:606.0px;border-left:3.5px solid transparent;border-right:3.5px solid transparent;border-top:5px solid #7a7a7a"></div>
<svg style="left:12px;top:604px" width="9" height="9"><path d="M4.5 0.3L5.8 3.3L9 3.4L6.5 5.4L7.4 8.7L4.5 6.9L1.6 8.7L2.5 5.4L0 3.4L3.2 3.3Z" fill="#d0d0d0"/></svg>
<div class="t" style="left:25px;top:602.8px;color:#d4d4d4;font-size:9.7px;font-weight:bold;">Favorites</div>
<svg style="left:22px;top:615.5px" width="10" height="10"><circle cx="3.8" cy="3.8" r="3" fill="none" stroke="#c4c4c4" stroke-width="1.1"/><path d="M6 6L9.3 9.3" stroke="#c4c4c4" stroke-width="1.4"/></svg>
<div class="t" style="left:34.5px;top:614.8px;color:#c4c4c4;font-size:9.7px;">All Materials</div>
<svg style="left:22px;top:627.5px" width="10" height="10"><circle cx="3.8" cy="3.8" r="3" fill="none" stroke="#c4c4c4" stroke-width="1.1"/><path d="M6 6L9.3 9.3" stroke="#c4c4c4" stroke-width="1.4"/></svg>
<div class="t" style="left:34.5px;top:626.8px;color:#c4c4c4;font-size:9.7px;">All Models</div>
<svg style="left:22px;top:639.5px" width="10" height="10"><circle cx="3.8" cy="3.8" r="3" fill="none" stroke="#c4c4c4" stroke-width="1.1"/><path d="M6 6L9.3 9.3" stroke="#c4c4c4" stroke-width="1.4"/></svg>
<div class="t" style="left:34.5px;top:638.8px;color:#c4c4c4;font-size:9.7px;">All Prefabs</div>
<div class="a" style="left:2px;top:666.0px;border-left:3.5px solid transparent;border-right:3.5px solid transparent;border-top:5px solid #7a7a7a"></div>
<svg style="left:12px;top:664.5px" width="11" height="8"><path d="M0.5 7.5V0.5H4L5 1.5H9V3" fill="none" stroke="#c4c4c4" stroke-width="1"/><path d="M0.5 7.5L2.5 3.5H10.5L8.5 7.5Z" fill="#c4c4c4"/></svg>
<div class="t" style="left:25px;top:662.8px;color:#d4d4d4;font-size:9.7px;font-weight:bold;">Assets</div>
<svg style="left:22.5px;top:676.5px" width="10" height="8"><path d="M0 0.5H3.8L4.8 1.5H9.5V7.5H0Z" fill="#c4c4c4"/></svg>
<div class="t" style="left:34.5px;top:674.8px;color:#c4c4c4;font-size:9.7px;">Scenes</div>
<svg style="left:22.5px;top:688.5px" width="10" height="8"><path d="M0 0.5H3.8L4.8 1.5H9.5V7.5H0Z" fill="#c4c4c4"/></svg>
<div class="t" style="left:34.5px;top:686.8px;color:#c4c4c4;font-size:9.7px;">Scripts</div>
<svg style="left:22.5px;top:700.5px" width="10" height="8"><path d="M0 0.5H3.8L4.8 1.5H9.5V7.5H0Z" fill="#c4c4c4"/></svg>
<div class="t" style="left:34.5px;top:698.8px;color:#c4c4c4;font-size:9.7px;">Settings</div>
<div class="a" style="left:13px;top:713.0px;border-top:3.5px solid transparent;border-bottom:3.5px solid transparent;border-left:5px solid #7a7a7a"></div>
<svg style="left:22.5px;top:712.5px" width="10" height="8"><path d="M0 0.5H3.8L4.8 1.5H9.5V7.5H0Z" fill="#c4c4c4"/></svg>
<div class="t" style="left:34.5px;top:710.8px;color:#c4c4c4;font-size:9.7px;">TutorialInfo</div>
<div class="a" style="left:2px;top:726.0px;border-left:3.5px solid transparent;border-right:3.5px solid transparent;border-top:5px solid #7a7a7a"></div>
<svg style="left:12px;top:724.5px" width="11" height="8"><path d="M0.5 7.5V0.5H4L5 1.5H9V3" fill="none" stroke="#c4c4c4" stroke-width="1"/><path d="M0.5 7.5L2.5 3.5H10.5L8.5 7.5Z" fill="#c4c4c4"/></svg>
<div class="t" style="left:25px;top:722.8px;color:#d4d4d4;font-size:9.7px;font-weight:bold;">Packages</div>
<div class="a" style="left:13px;top:737.0px;border-top:3.5px solid transparent;border-bottom:3.5px solid transparent;border-left:5px solid #7a7a7a"></div>
<svg style="left:22.5px;top:736.5px" width="10" height="8"><path d="M0 0.5H3.8L4.8 1.5H9.5V7.5H0Z" fill="#c4c4c4"/></svg>
<div class="t" style="left:34.5px;top:734.8px;color:#c4c4c4;font-size:9.7px;">AI Navigation</div>
<div class="a" style="left:13px;top:749.0px;border-top:3.5px solid transparent;border-bottom:3.5px solid transparent;border-left:5px solid #7a7a7a"></div>
<svg style="left:22.5px;top:748.5px" width="10" height="8"><path d="M0 0.5H3.8L4.8 1.5H9.5V7.5H0Z" fill="#c4c4c4"/></svg>
<div class="t" style="left:34.5px;top:746.8px;color:#c4c4c4;font-size:9.7px;">Burst</div>
<div class="a" style="left:13px;top:761.0px;border-top:3.5px solid transparent;border-bottom:3.5px solid transparent;border-left:5px solid #7a7a7a"></div>
<svg style="left:22.5px;top:760.5px" width="10" height="8"><path d="M0 0.5H3.8L4.8 1.5H9.5V7.5H0Z" fill="#c4c4c4"/></svg>
<div class="t" style="left:34.5px;top:758.8px;color:#c4c4c4;font-size:9.7px;">Collections</div>
<div class="a" style="left:13px;top:773.0px;border-top:3.5px solid transparent;border-bottom:3.5px solid transparent;border-left:5px solid #7a7a7a"></div>
<svg style="left:22.5px;top:772.5px" width="10" height="8"><path d="M0 0.5H3.8L4.8 1.5H9.5V7.5H0Z" fill="#c4c4c4"/></svg>
<div class="t" style="left:34.5px;top:770.8px;color:#c4c4c4;font-size:9.7px;">Custom NUnit</div>
<div class="a" style="left:13px;top:785.0px;border-top:3.5px solid transparent;border-bottom:3.5px solid transparent;border-left:5px solid #7a7a7a"></div>
<svg style="left:22.5px;top:784.5px" width="10" height="8"><path d="M0 0.5H3.8L4.8 1.5H9.5V7.5H0Z" fill="#c4c4c4"/></svg>
<div class="t" style="left:34.5px;top:782.8px;color:#c4c4c4;font-size:9.7px;">Input System</div>
<div class="a" style="left:13px;top:797.0px;border-top:3.5px solid transparent;border-bottom:3.5px solid transparent;border-left:5px solid #7a7a7a"></div>
<svg style="left:22.5px;top:796.5px" width="10" height="8"><path d="M0 0.5H3.8L4.8 1.5H9.5V7.5H0Z" fill="#c4c4c4"/></svg>
<div class="t" style="left:34.5px;top:794.8px;color:#c4c4c4;font-size:9.7px;">JetBrains Rider Editor</div>
<div class="a" style="left:13px;top:809.0px;border-top:3.5px solid transparent;border-bottom:3.5px solid transparent;border-left:5px solid #7a7a7a"></div>
<svg style="left:22.5px;top:808.5px" width="10" height="8"><path d="M0 0.5H3.8L4.8 1.5H9.5V7.5H0Z" fill="#c4c4c4"/></svg>
<div class="t" style="left:34.5px;top:806.8px;color:#c4c4c4;font-size:9.7px;">Mathematics</div>
<div class="a" style="left:13px;top:821.0px;border-top:3.5px solid transparent;border-bottom:3.5px solid transparent;border-left:5px solid #7a7a7a"></div>
<svg style="left:22.5px;top:820.5px" width="10" height="8"><path d="M0 0.5H3.8L4.8 1.5H9.5V7.5H0Z" fill="#c4c4c4"/></svg>
<div class="t" style="left:34.5px;top:818.8px;color:#c4c4c4;font-size:9.7px;">Mono Cecil</div>
<div class="a" style="left:13px;top:833.0px;border-top:3.5px solid transparent;border-bottom:3.5px solid transparent;border-left:5px solid #7a7a7a"></div>
<svg style="left:22.5px;top:832.5px" width="10" height="8"><path d="M0 0.5H3.8L4.8 1.5H9.5V7.5H0Z" fill="#c4c4c4"/></svg>
<div class="t" style="left:34.5px;top:830.8px;color:#c4c4c4;font-size:9.7px;">Multiplayer Center</div>
<div class="a" style="left:13px;top:845.0px;border-top:3.5px solid transparent;border-bottom:3.5px solid transparent;border-left:5px solid #7a7a7a"></div>
<svg style="left:22.5px;top:844.5px" width="10" height="8"><path d="M0 0.5H3.8L4.8 1.5H9.5V7.5H0Z" fill="#c4c4c4"/></svg>
<div class="t" style="left:34.5px;top:842.8px;color:#c4c4c4;font-size:9.7px;">Performance testing API</div>
<div class="a" style="left:149px;top:602px;width:683px;height:17px;background:#393939;"></div>
<div class="a" style="left:149px;top:619px;width:683px;height:230px;background:#333333;"></div>
<div class="t" style="left:152px;top:604.8px;color:#a8a8a8;font-size:9.7px;">Assets</div>
<svg style="left:186px;top:607px" width="5" height="8"><path d="M0.8 0.8L4 4L0.8 7.2" fill="none" stroke="#a0a0a0" stroke-width="1"/></svg>
<div class="t" style="left:194.5px;top:604.8px;color:#d0d0d0;font-size:9.7px;font-weight:bold;">Scripts</div>
<svg style="left:163px;top:620px" width="9" height="11"><path d="M0.5 0.5H6L8.5 3V10.5H0.5Z" fill="#e8e8e8"/><path d="M3.2 2.5L2.6 9M5.6 2.5L5 9M1.8 4.5H7M1.5 7H6.7" stroke="#2e8a4a" stroke-width="1"/></svg>
<div class="t" style="left:175px;top:619.3px;color:#c4c4c4;font-size:9.7px;">MoveCube</div>
<div class="a" style="left:149px;top:833px;width:683px;height:16px;background:#3c3c3c;"></div>
<div class="a" style="left:786px;top:840px;width:44px;height:1px;background:#6a6a6a;"></div>
<div class="a" style="left:777px;top:836.5px;width:8px;height:8px;background:#9a9a9a;border-radius:50%"></div>
<div class="a" style="left:0px;top:849px;width:1200px;height:14px;background:#191919;"></div>
<svg style="left:2px;top:851px" width="10" height="10"><circle cx="5" cy="5" r="4.8" fill="#e0e0e0"/><rect x="4.2" y="1.8" width="1.6" height="4.3" fill="#191919"/><circle cx="5" cy="7.9" r="0.9" fill="#191919"/></svg>
<div class="t" style="left:13.5px;top:850.8px;color:#c4c4c4;font-size:9.5px;">Cube (UnityEngine.Rigidbody)</div>
<div class="a" style="left:1143.5px;top:851px;width:1px;height:12px;background:#2a2a2a;"></div>
<svg style="left:1148px;top:852px" width="11" height="11"><ellipse cx="5.5" cy="6.8" rx="3" ry="3.8" fill="#c8c8c8"/><circle cx="5.5" cy="2.5" r="1.8" fill="#c8c8c8"/><path d="M1 4L3 5M10 4L8 5M0.5 7H2.5M10.5 7H8.5M1 10.5L3 9.5M10 10.5L8 9.5" stroke="#c8c8c8" stroke-width="0.9"/><path d="M1 0.5L10.5 11" stroke="#191919" stroke-width="1.6"/><path d="M1.5 0.5L10.5 10.5" stroke="#c8c8c8" stroke-width="0.8"/></svg>
<div class="a" style="left:1163px;top:851px;width:1px;height:12px;background:#2a2a2a;"></div>
<svg style="left:1168px;top:852px" width="11" height="12"><ellipse cx="5.5" cy="2.5" rx="4.3" ry="1.8" fill="#c8c8c8"/><path d="M1.2 4.6Q5.5 7 9.8 4.6M1.2 7.2Q5.5 9.6 9.8 7.2M1.2 9.8Q5.5 12.2 9.8 9.8" fill="none" stroke="#c8c8c8" stroke-width="1.3"/><path d="M0.5 1L10.5 11.5" stroke="#191919" stroke-width="1.5"/><path d="M1 1L10.5 11" stroke="#c8c8c8" stroke-width="0.8"/></svg>
<div class="a" style="left:1182.5px;top:851px;width:1px;height:12px;background:#2a2a2a;"></div>
<svg style="left:1187px;top:852px" width="12" height="12"><circle cx="6" cy="6" r="5.2" fill="none" stroke="#c8c8c8" stroke-width="1"/><path d="M3.8 6.2L5.4 7.6L8.3 4.6" fill="none" stroke="#c8c8c8" stroke-width="1.1"/></svg><!--/PROJ-->

</body></html>
